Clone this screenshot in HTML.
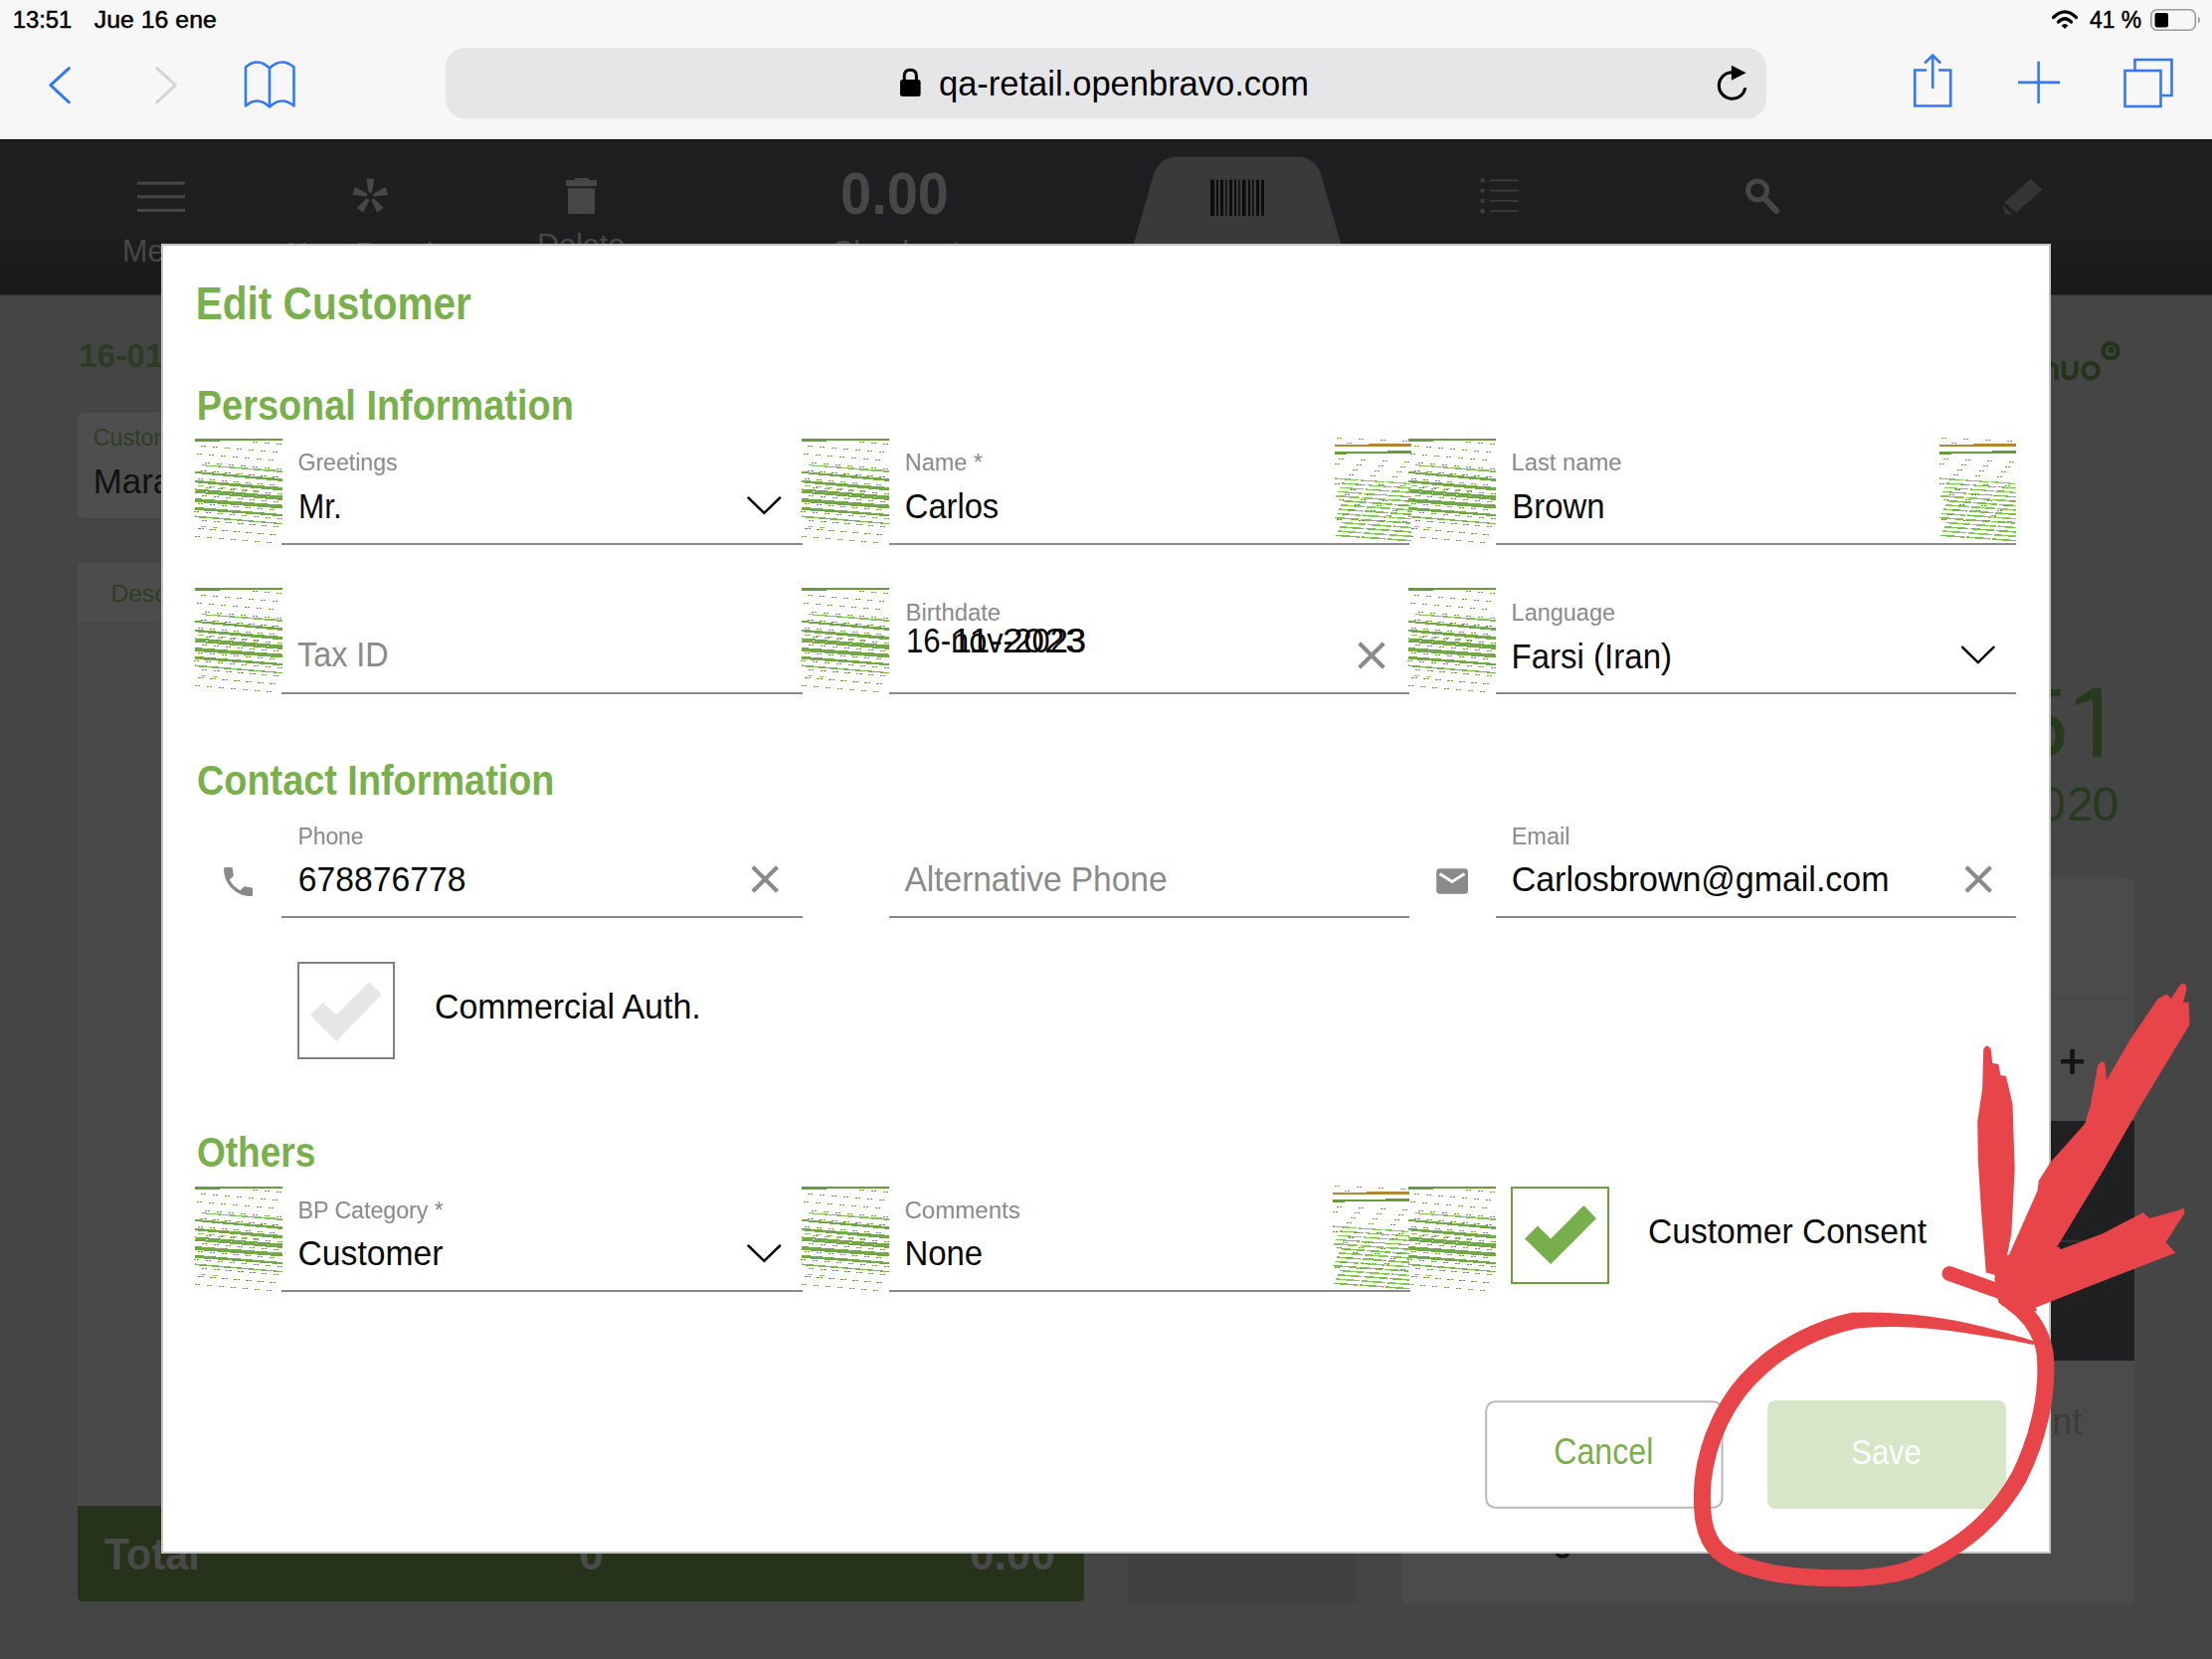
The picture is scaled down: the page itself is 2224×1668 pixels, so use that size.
<!DOCTYPE html><html><head><meta charset="utf-8"><title>Edit Customer</title><style>html,body{margin:0;padding:0;background:#454545;overflow:hidden;width:2224px;height:1668px}svg text{font-family:"Liberation Sans",sans-serif}</style></head><body><svg width="2224" height="1668" viewBox="0 0 2224 1668" style="display:block" font-family="Liberation Sans, sans-serif">
<defs></defs>
<rect x="0" y="0" width="2224" height="1668" fill="#454545"/>
<rect x="78" y="566" width="1012" height="1044" rx="6" fill="#4a4a4a"/>
<rect x="78" y="415" width="1012" height="106" rx="6" fill="#4e4e4e"/>
<rect x="78" y="566" width="1012" height="60" fill="#4c4c4c"/>
<rect x="78" y="626" width="1012" height="1" fill="#474747"/>
<text x="79.0" y="369.0" font-size="33.43" fill="#2c3b21" font-weight="bold">16-01-2020</text>
<text x="93.8" y="447.5" font-size="23.26" fill="#2e3d22">Customer</text>
<text x="93.8" y="496.0" font-size="34.88" fill="#111111">Maraxxx</text>
<text x="111.5" y="605.0" font-size="24.71" fill="#2e3d22">Description</text>
<path d="M78,1514 H1090 V1604 Q1090,1610 1084,1610 H84 Q78,1610 78,1604 Z" fill="#263219"/>
<text x="104.8" y="1578.0" font-size="45.06" fill="#4a4a4a" font-weight="bold" textLength="96.0" lengthAdjust="spacingAndGlyphs">Total</text>
<text x="582.0" y="1578.0" font-size="45.06" fill="#4a4a4a" font-weight="bold">0</text>
<text x="975.0" y="1578.0" font-size="45.06" fill="#4a4a4a" font-weight="bold" textLength="86.0" lengthAdjust="spacingAndGlyphs">0.00</text>
<rect x="1134" y="1500" width="230" height="112" rx="4" fill="#414141"/>
<rect x="1410" y="883" width="736" height="729" rx="6" fill="#4b4b4b"/>
<rect x="1410" y="1004" width="736" height="1" fill="#444"/>
<rect x="1410" y="1127" width="736" height="241" fill="#1f2022"/>
<rect x="1410" y="1247" width="736" height="2" fill="#303133"/>
<rect x="2072" y="1065" width="23" height="4.5" fill="#141414"/><rect x="2081.3" y="1055" width="4.5" height="25" fill="#141414"/>
<text x="2063.0" y="1442.0" font-size="36.34" fill="#3c3c3c">nt</text>
<text x="2025.5" y="760.5" font-size="97.38" fill="#263a1d">5</text>
<g fill="#263a1d"><rect x="2104" y="692" width="9" height="68.8"/><polygon points="2104.5,692 2113,692 2113,700 2086.8,709.2 2086.8,703.3"/></g>
<text x="2024 2050 2078 2103.5" y="825.3" font-size="47.97" fill="#263a1d">2020</text>
<g fill="none" stroke="#24341b" stroke-width="4.4"><path d="M2061,365.5 Q2067.6,366.5 2067.6,373 V382"/><path d="M2074.9,363 V375 Q2074.9,380 2080.5,380 Q2087.4,380 2087.4,372 V363"/><circle cx="2102" cy="372.6" r="7.6"/><circle cx="2122" cy="352.7" r="7.6"/></g>
<circle cx="2122.5" cy="352" r="3.2" fill="#24341b"/>
<circle cx="1571" cy="1558" r="7" fill="none" stroke="#111" stroke-width="3.5"/>
<linearGradient id="tbg" x1="0" y1="0" x2="0" y2="1"><stop offset="0" stop-color="#1f1f21"/><stop offset="0.6" stop-color="#1e1e20"/><stop offset="1" stop-color="#19191b"/></linearGradient>
<rect x="0" y="140" width="2224" height="156.5" fill="url(#tbg)"/><rect x="0" y="140" width="2224" height="1.5" fill="#0e0e0e"/>
<path d="M1125,296.5 L1160,175 Q1166,157.6 1186,157.6 H1302 Q1322,157.6 1328,175 L1363,296.5 Z" fill="#3a3a3b"/>
<g fill="#474747"><rect x="138" y="182.7" width="48" height="3"/><rect x="138" y="196.3" width="48" height="3"/><rect x="138" y="210" width="48" height="3"/></g>
<text x="123.0" y="263.0" font-size="30.52" fill="#474747">Menu</text>
<g fill="#474747"><polygon points="373.9,193.8 376.3,179.8 368.3,179.8 370.7,193.8"/><polygon points="376.1,197.7 390.2,195.7 387.7,188.1 375.1,194.7"/><polygon points="373.1,201.1 379.4,213.8 385.8,209.1 375.7,199.2"/><polygon points="368.9,199.2 358.8,209.1 365.2,213.8 371.5,201.1"/><polygon points="369.5,194.7 356.9,188.1 354.4,195.7 368.5,197.7"/></g>
<text x="288.0" y="266.0" font-size="30.52" fill="#474747">New Receipt</text>
<g fill="#474747"><rect x="578" y="179" width="14" height="2.5"/><rect x="569" y="181.2" width="31" height="6"/><rect x="571" y="189.3" width="27" height="25.7"/></g>
<text x="540.0" y="257.0" font-size="30.52" fill="#474747">Delete</text>
<text x="845.0" y="215.0" font-size="59.59" fill="#474747" font-weight="bold" textLength="109.0" lengthAdjust="spacingAndGlyphs">0.00</text>
<text x="836.0" y="264.0" font-size="30.52" fill="#474747">Checkout</text>
<g fill="#0d0d0d"><rect x="1217" y="180.7" width="4" height="36.3"/><rect x="1223" y="180.7" width="2" height="36.3"/><rect x="1227" y="180.7" width="3" height="36.3"/><rect x="1232" y="180.7" width="1.5" height="36.3"/><rect x="1236" y="180.7" width="3" height="36.3"/><rect x="1241" y="180.7" width="2" height="36.3"/><rect x="1245" y="180.7" width="1.5" height="36.3"/><rect x="1249" y="180.7" width="3.5" height="36.3"/><rect x="1255" y="180.7" width="2" height="36.3"/><rect x="1259" y="180.7" width="1.5" height="36.3"/><rect x="1263" y="180.7" width="3" height="36.3"/><rect x="1268" y="180.7" width="3" height="36.3"/></g>
<text x="1200.0" y="268.0" font-size="30.52" fill="#0d0d0d">Scan</text>
<g fill="#3e3e3e"><circle cx="1490.5" cy="181.3" r="2.2"/><rect x="1498" y="180.5" width="29" height="1.7"/><circle cx="1490.5" cy="191.6" r="2.2"/><rect x="1498" y="190.8" width="29" height="1.7"/><circle cx="1490.5" cy="201.9" r="2.2"/><rect x="1498" y="201.1" width="29" height="1.7"/><circle cx="1490.5" cy="212.2" r="2.2"/><rect x="1498" y="211.4" width="29" height="1.7"/></g>
<text x="1450.0" y="268.0" font-size="30.52" fill="#474747">Browse</text>
<circle cx="1767" cy="191.5" r="9.5" fill="none" stroke="#474747" stroke-width="5"/><line x1="1774" y1="199" x2="1786" y2="212" stroke="#474747" stroke-width="6" stroke-linecap="round"/>
<text x="1716.0" y="268.0" font-size="30.52" fill="#474747">Search</text>
<g fill="#353437"><polygon points="2041.5,180 2053.5,190.5 2027,214 2015,203.5"/><polygon points="2013,206 2024,215.5 2016,216"/></g>
<text x="1995.0" y="268.0" font-size="30.52" fill="#474747">Edit</text>
<rect x="0" y="0" width="2224" height="140" fill="#f7f7f7"/>
<text x="12.7" y="28.2" font-size="24.42" fill="#000" textLength="59.6" lengthAdjust="spacingAndGlyphs" stroke="#000" stroke-width="0.5">13:51</text>
<text x="94.8" y="28.2" font-size="24.42" fill="#000" textLength="123.0" lengthAdjust="spacingAndGlyphs" stroke="#000" stroke-width="0.5">Jue 16 ene</text>
<text x="2101.0" y="28.0" font-size="23.69" fill="#000" textLength="52.0" lengthAdjust="spacingAndGlyphs" stroke="#000" stroke-width="0.5">41 %</text>
<g fill="none" stroke="#000" stroke-width="3.2" stroke-linecap="round"><path d="M2064.5,17.5 Q2076,6 2087.5,17.5"/><path d="M2069.5,22 Q2076,15.5 2082.5,22"/></g><path d="M2072.5,25.5 L2076,29 L2079.5,25.5 Q2076,22.5 2072.5,25.5 Z" fill="#000"/>
<rect x="2162.8" y="9.8" width="44.5" height="20.5" rx="6" fill="none" stroke="#9a9a9a" stroke-width="1.6"/><rect x="2166.5" y="13" width="13.5" height="14.5" rx="2" fill="#000"/><path d="M2210,16.5 Q2214,20 2210,23.5 Z" fill="#9a9a9a"/>
<polyline points="69.4,68.7 50.8,85.6 69.4,102.8" fill="none" stroke="#3478f6" stroke-width="3" stroke-linecap="round" stroke-linejoin="round"/>
<polyline points="157.8,68.7 176.4,85.6 157.8,102.8" fill="none" stroke="#d4d4d4" stroke-width="3" stroke-linecap="round" stroke-linejoin="round"/>
<g fill="none" stroke="#3478f6" stroke-width="2.6" stroke-linejoin="round"><path d="M271,68.5 Q259,57 247,67.5 V106.5 Q259,96 271,107.5 Q283,96 295.5,106.5 V67.5 Q283,57 271,68.5 V107.5"/></g>
<rect x="448" y="48" width="1328" height="71.5" rx="20" fill="#e6e6e9"/>
<rect x="905" y="80" width="20.6" height="17" rx="2.5" fill="#000"/><path d="M909.2,81 V76.5 Q909.2,70.2 915.3,70.2 Q921.4,70.2 921.4,76.5 V81" fill="none" stroke="#000" stroke-width="3"/>
<text x="944.0" y="96.3" font-size="35.75" fill="#000" textLength="372.0" lengthAdjust="spacingAndGlyphs">qa-retail.openbravo.com</text>
<path d="M1741.6,72.7 A13.3,13.3 0 1 0 1754.7,88.3" fill="none" stroke="#000" stroke-width="3.1"/><polygon points="1740.8,65.8 1755.5,73.3 1740.8,80.8" fill="#000"/>
<g fill="none" stroke="#3478f6" stroke-width="2.6"><polyline points="1937,70.5 1925.2,70.5 1925.2,106.5 1961.2,106.5 1961.2,70.5 1949,70.5"/><line x1="1943.2" y1="56" x2="1943.2" y2="89"/><polyline points="1935.2,63.5 1943.2,55.5 1951.2,63.5"/></g>
<g stroke="#3478f6" stroke-width="2.6"><line x1="2029" y1="82.9" x2="2071" y2="82.9"/><line x1="2049.6" y1="61.7" x2="2049.6" y2="104"/></g>
<g fill="none" stroke="#3478f6" stroke-width="2.6"><polyline points="2146.5,70 2146.5,60 2183.5,60 2183.5,96 2173.5,96"/><rect x="2136.5" y="71" width="36" height="36"/></g>
<rect x="163" y="246" width="1898" height="1315" fill="#fff" stroke="#c4c4c4" stroke-width="2"/>
<text x="196.8" y="321.3" font-size="47.09" fill="#79b04c" font-weight="bold" textLength="277.0" lengthAdjust="spacingAndGlyphs">Edit Customer</text>
<text x="197.8" y="422.2" font-size="42.15" fill="#79b04c" font-weight="bold" textLength="379.0" lengthAdjust="spacingAndGlyphs">Personal Information</text>
<text x="198.0" y="798.6" font-size="41.86" fill="#79b04c" font-weight="bold" textLength="359.5" lengthAdjust="spacingAndGlyphs">Contact Information</text>
<text x="197.9" y="1172.8" font-size="42.15" fill="#79b04c" font-weight="bold" textLength="119.5" lengthAdjust="spacingAndGlyphs">Others</text>
<rect x="283" y="546" width="524" height="2" fill="#8a8a8a"/>
<rect x="894" y="546" width="523" height="2" fill="#8a8a8a"/>
<rect x="1504" y="546" width="523" height="2" fill="#8a8a8a"/>
<g transform="translate(196,441)" shape-rendering="crispEdges"><rect x="0" y="0.2" width="25" height="2.8" fill="#6a9a3d"/><rect x="25" y="-0.2" width="63" height="2.6" fill="#6a9a3d"/><g fill="#6a9a3d"><rect x="57.8" y="3.0" width="2.1" height="1" /><rect x="60.9" y="3.0" width="2.1" height="1" /><rect x="69.8" y="4.0" width="2.1" height="1" /><rect x="72.8" y="4.0" width="2.1" height="1" /><rect x="81.8" y="5.0" width="2.1" height="1" /><rect x="84.8" y="5.0" width="2.1" height="1" /><rect x="5.9" y="7.0" width="2.1" height="1" /><rect x="9.0" y="7.0" width="2.1" height="1" /><rect x="17.9" y="8.1" width="2.1" height="1" /><rect x="21.0" y="8.1" width="2.1" height="1" /><rect x="29.9" y="9.1" width="2.1" height="1" /><rect x="33.0" y="9.1" width="2.1" height="1" /><rect x="41.9" y="10.1" width="2.1" height="1" /><rect x="45.0" y="10.1" width="2.1" height="1" /><rect x="53.9" y="11.1" width="2.1" height="1" /><rect x="57.0" y="11.1" width="2.1" height="1" /><rect x="65.9" y="12.1" width="2.1" height="1" /><rect x="69.0" y="12.1" width="2.1" height="1" /><rect x="77.9" y="13.1" width="2.1" height="1" /><rect x="81.0" y="13.1" width="2.1" height="1" /><rect x="2.1" y="15.1" width="2.1" height="1" /><rect x="5.2" y="15.1" width="2.1" height="1" /><rect x="14.1" y="16.1" width="2.1" height="1" /><rect x="17.2" y="16.1" width="2.1" height="1" /><rect x="26.1" y="17.1" width="2.1" height="1" /><rect x="29.2" y="17.1" width="2.1" height="1" /><rect x="38.0" y="18.1" width="2.1" height="1" /><rect x="41.1" y="18.1" width="2.1" height="1" /><rect x="50.0" y="19.1" width="2.1" height="1" /><rect x="53.1" y="19.1" width="2.1" height="1" /><rect x="62.0" y="20.1" width="2.1" height="1" /><rect x="65.1" y="20.1" width="2.1" height="1" /><rect x="74.0" y="21.1" width="2.1" height="1" /><rect x="77.1" y="21.1" width="2.1" height="1" /><rect x="10.2" y="24.1" width="2.1" height="1" /><rect x="13.3" y="24.1" width="2.1" height="1" /><rect x="22.2" y="25.1" width="2.1" height="1" /><rect x="25.3" y="25.1" width="2.1" height="1" /><rect x="34.2" y="26.1" width="2.1" height="1" /><rect x="37.3" y="26.1" width="2.1" height="1" /><rect x="46.2" y="27.1" width="2.1" height="1" /><rect x="49.3" y="27.1" width="2.1" height="1" /><rect x="58.2" y="28.1" width="2.1" height="1" /><rect x="61.3" y="28.1" width="2.1" height="1" /><rect x="70.2" y="29.1" width="2.1" height="1" /><rect x="73.3" y="29.1" width="2.1" height="1" /><rect x="82.2" y="30.1" width="2.1" height="1" /><rect x="85.3" y="30.1" width="2.1" height="1" /><rect x="6.3" y="32.0" width="2.1" height="1" /><rect x="9.4" y="32.0" width="2.1" height="1" /><rect x="18.4" y="33.0" width="2.1" height="1" /><rect x="21.5" y="33.0" width="2.1" height="1" /><rect x="30.4" y="34.0" width="2.1" height="1" /><rect x="33.5" y="34.0" width="2.1" height="1" /><rect x="42.4" y="35.0" width="2.1" height="1" /><rect x="45.5" y="35.0" width="2.1" height="1" /><rect x="54.4" y="36.0" width="2.1" height="1" /><rect x="57.5" y="36.0" width="2.1" height="1" /><rect x="66.3" y="37.0" width="2.1" height="1" /><rect x="69.4" y="37.0" width="2.1" height="1" /><rect x="78.3" y="38.0" width="2.1" height="1" /><rect x="81.4" y="38.0" width="2.1" height="1" /><rect x="2.5" y="40.0" width="2.1" height="1" /><rect x="5.6" y="40.0" width="2.1" height="1" /><rect x="14.5" y="41.0" width="2.1" height="1" /><rect x="17.6" y="41.0" width="2.1" height="1" /><rect x="26.5" y="42.0" width="2.1" height="1" /><rect x="29.6" y="42.0" width="2.1" height="1" /><rect x="38.5" y="43.0" width="2.1" height="1" /><rect x="41.6" y="43.0" width="2.1" height="1" /><rect x="50.5" y="44.0" width="2.1" height="1" /><rect x="53.6" y="44.0" width="2.1" height="1" /><rect x="62.5" y="45.0" width="2.1" height="1" /><rect x="65.6" y="45.0" width="2.1" height="1" /><rect x="74.5" y="46.0" width="2.1" height="1" /><rect x="77.6" y="46.0" width="2.1" height="1" /><rect x="10.7" y="49.0" width="2.1" height="1" /><rect x="13.8" y="49.0" width="2.1" height="1" /><rect x="22.6" y="50.0" width="2.1" height="1" /><rect x="25.8" y="50.0" width="2.1" height="1" /><rect x="34.6" y="51.0" width="2.1" height="1" /><rect x="37.8" y="51.0" width="2.1" height="1" /><rect x="46.6" y="52.0" width="2.1" height="1" /><rect x="49.8" y="52.0" width="2.1" height="1" /><rect x="58.6" y="53.0" width="2.1" height="1" /><rect x="61.8" y="53.0" width="2.1" height="1" /><rect x="70.7" y="54.0" width="2.1" height="1" /><rect x="73.8" y="54.0" width="2.1" height="1" /><rect x="82.7" y="55.0" width="2.1" height="1" /><rect x="85.8" y="55.0" width="2.1" height="1" /><rect x="6.8" y="57.0" width="2.1" height="1" /><rect x="9.9" y="57.0" width="2.1" height="1" /><rect x="18.8" y="58.0" width="2.1" height="1" /><rect x="21.9" y="58.0" width="2.1" height="1" /><rect x="30.8" y="59.0" width="2.1" height="1" /><rect x="33.9" y="59.0" width="2.1" height="1" /><rect x="42.8" y="60.0" width="2.1" height="1" /><rect x="45.9" y="60.0" width="2.1" height="1" /><rect x="54.8" y="61.0" width="2.1" height="1" /><rect x="57.9" y="61.0" width="2.1" height="1" /><rect x="66.8" y="62.0" width="2.1" height="1" /><rect x="69.9" y="62.0" width="2.1" height="1" /><rect x="78.8" y="63.0" width="2.1" height="1" /><rect x="81.9" y="63.0" width="2.1" height="1" /><rect x="3.0" y="65.0" width="2.1" height="1" /><rect x="6.1" y="65.0" width="2.1" height="1" /><rect x="15.0" y="66.0" width="2.1" height="1" /><rect x="18.1" y="66.0" width="2.1" height="1" /><rect x="27.0" y="67.0" width="2.1" height="1" /><rect x="30.1" y="67.0" width="2.1" height="1" /><rect x="39.0" y="68.0" width="2.1" height="1" /><rect x="42.1" y="68.0" width="2.1" height="1" /><rect x="51.0" y="69.0" width="2.1" height="1" /><rect x="54.1" y="69.0" width="2.1" height="1" /><rect x="63.0" y="70.0" width="2.1" height="1" /><rect x="66.0" y="70.0" width="2.1" height="1" /><rect x="75.0" y="71.0" width="2.1" height="1" /><rect x="78.0" y="71.0" width="2.1" height="1" /><rect x="-0.9" y="73.0" width="2.1" height="1" /><rect x="2.2" y="73.0" width="2.1" height="1" /><rect x="11.1" y="74.0" width="2.1" height="1" /><rect x="14.2" y="74.0" width="2.1" height="1" /><rect x="23.1" y="75.0" width="2.1" height="1" /><rect x="26.2" y="75.0" width="2.1" height="1" /><rect x="35.1" y="76.0" width="2.1" height="1" /><rect x="38.2" y="76.0" width="2.1" height="1" /><rect x="47.1" y="77.0" width="2.1" height="1" /><rect x="50.2" y="77.0" width="2.1" height="1" /><rect x="59.1" y="78.0" width="2.1" height="1" /><rect x="62.2" y="78.0" width="2.1" height="1" /><rect x="71.1" y="79.0" width="2.1" height="1" /><rect x="74.2" y="79.0" width="2.1" height="1" /><rect x="83.1" y="80.0" width="2.1" height="1" /><rect x="86.2" y="80.0" width="2.1" height="1" /><rect x="7.2" y="82.0" width="2.1" height="1" /><rect x="10.3" y="82.0" width="2.1" height="1" /><rect x="19.2" y="83.0" width="2.1" height="1" /><rect x="22.4" y="83.0" width="2.1" height="1" /><rect x="31.2" y="84.0" width="2.1" height="1" /><rect x="34.4" y="84.0" width="2.1" height="1" /><rect x="43.2" y="85.0" width="2.1" height="1" /><rect x="46.4" y="85.0" width="2.1" height="1" /><rect x="55.2" y="86.0" width="2.1" height="1" /><rect x="58.4" y="86.0" width="2.1" height="1" /><rect x="67.2" y="87.0" width="2.1" height="1" /><rect x="70.3" y="87.0" width="2.1" height="1" /><rect x="79.2" y="88.0" width="2.1" height="1" /><rect x="82.3" y="88.0" width="2.1" height="1" /><rect x="3.4" y="90.0" width="2.1" height="1" /><rect x="6.5" y="90.0" width="2.1" height="1" /><rect x="15.4" y="91.0" width="2.1" height="1" /><rect x="18.5" y="91.0" width="2.1" height="1" /><rect x="27.4" y="92.0" width="2.1" height="1" /><rect x="30.5" y="92.0" width="2.1" height="1" /><rect x="39.4" y="93.0" width="2.1" height="1" /><rect x="42.5" y="93.0" width="2.1" height="1" /><rect x="51.4" y="94.0" width="2.1" height="1" /><rect x="54.5" y="94.0" width="2.1" height="1" /><rect x="63.4" y="95.0" width="2.1" height="1" /><rect x="66.5" y="95.0" width="2.1" height="1" /><rect x="75.4" y="96.0" width="2.1" height="1" /><rect x="78.5" y="96.0" width="2.1" height="1" /><rect x="-0.5" y="98.0" width="2.1" height="1" /><rect x="2.6" y="98.0" width="2.1" height="1" /><rect x="11.5" y="99.0" width="2.1" height="1" /><rect x="14.6" y="99.0" width="2.1" height="1" /><rect x="23.5" y="100.0" width="2.1" height="1" /><rect x="26.6" y="100.0" width="2.1" height="1" /><rect x="35.5" y="101.0" width="2.1" height="1" /><rect x="38.6" y="101.0" width="2.1" height="1" /><rect x="47.5" y="102.0" width="2.1" height="1" /><rect x="50.6" y="102.0" width="2.1" height="1" /><rect x="59.5" y="103.0" width="2.1" height="1" /><rect x="62.6" y="103.0" width="2.1" height="1" /><rect x="71.5" y="104.0" width="2.1" height="1" /><rect x="74.6" y="104.0" width="2.1" height="1" /></g><polygon points="6.6,26.12 88,32.00 88,34.00 6.6,27.12" fill="#86bd5e"/><polygon points="0,32.90 88,40.20 88,43.00 0,34.90" fill="#72a847"/><polygon points="0,41.75 88,48.95 88,52.45 0,44.25" fill="#72a847"/><polygon points="0,50.40 88,57.50 88,59.70 0,52.40" fill="#72a847"/><polygon points="0,52.60 88,59.70 88,61.90 0,54.60" fill="#72a847"/><polygon points="0,60.00 88,66.60 88,70.40 0,63.80" fill="#72a847"/><polygon points="0,68.75 88,76.00 88,78.20 0,71.85" fill="#72a847"/><polygon points="0,77.45 88,85.00 88,86.20 0,79.15" fill="#7cb552"/><rect x="3.0" y="46.5" width="6" height="1" fill="#8cc268"/><rect x="14.0" y="47.5" width="6" height="1" fill="#8cc268"/><rect x="25.0" y="48.5" width="6" height="1" fill="#8cc268"/><rect x="36.0" y="49.5" width="6" height="1" fill="#8cc268"/><rect x="47.0" y="50.5" width="6" height="1" fill="#8cc268"/><rect x="58.0" y="51.5" width="6" height="1" fill="#8cc268"/><rect x="6.0" y="87.5" width="5" height="1" fill="#8cc268"/><rect x="18.0" y="88.5" width="5" height="1" fill="#8cc268"/></g>
<g transform="translate(806,441)" shape-rendering="crispEdges"><rect x="0" y="0.2" width="25" height="2.8" fill="#6a9a3d"/><rect x="25" y="-0.2" width="63" height="2.6" fill="#6a9a3d"/><g fill="#6a9a3d"><rect x="57.8" y="3.0" width="2.1" height="1" /><rect x="60.9" y="3.0" width="2.1" height="1" /><rect x="69.8" y="4.0" width="2.1" height="1" /><rect x="72.8" y="4.0" width="2.1" height="1" /><rect x="81.8" y="5.0" width="2.1" height="1" /><rect x="84.8" y="5.0" width="2.1" height="1" /><rect x="5.9" y="7.0" width="2.1" height="1" /><rect x="9.0" y="7.0" width="2.1" height="1" /><rect x="17.9" y="8.1" width="2.1" height="1" /><rect x="21.0" y="8.1" width="2.1" height="1" /><rect x="29.9" y="9.1" width="2.1" height="1" /><rect x="33.0" y="9.1" width="2.1" height="1" /><rect x="41.9" y="10.1" width="2.1" height="1" /><rect x="45.0" y="10.1" width="2.1" height="1" /><rect x="53.9" y="11.1" width="2.1" height="1" /><rect x="57.0" y="11.1" width="2.1" height="1" /><rect x="65.9" y="12.1" width="2.1" height="1" /><rect x="69.0" y="12.1" width="2.1" height="1" /><rect x="77.9" y="13.1" width="2.1" height="1" /><rect x="81.0" y="13.1" width="2.1" height="1" /><rect x="2.1" y="15.1" width="2.1" height="1" /><rect x="5.2" y="15.1" width="2.1" height="1" /><rect x="14.1" y="16.1" width="2.1" height="1" /><rect x="17.2" y="16.1" width="2.1" height="1" /><rect x="26.1" y="17.1" width="2.1" height="1" /><rect x="29.2" y="17.1" width="2.1" height="1" /><rect x="38.0" y="18.1" width="2.1" height="1" /><rect x="41.1" y="18.1" width="2.1" height="1" /><rect x="50.0" y="19.1" width="2.1" height="1" /><rect x="53.1" y="19.1" width="2.1" height="1" /><rect x="62.0" y="20.1" width="2.1" height="1" /><rect x="65.1" y="20.1" width="2.1" height="1" /><rect x="74.0" y="21.1" width="2.1" height="1" /><rect x="77.1" y="21.1" width="2.1" height="1" /><rect x="10.2" y="24.1" width="2.1" height="1" /><rect x="13.3" y="24.1" width="2.1" height="1" /><rect x="22.2" y="25.1" width="2.1" height="1" /><rect x="25.3" y="25.1" width="2.1" height="1" /><rect x="34.2" y="26.1" width="2.1" height="1" /><rect x="37.3" y="26.1" width="2.1" height="1" /><rect x="46.2" y="27.1" width="2.1" height="1" /><rect x="49.3" y="27.1" width="2.1" height="1" /><rect x="58.2" y="28.1" width="2.1" height="1" /><rect x="61.3" y="28.1" width="2.1" height="1" /><rect x="70.2" y="29.1" width="2.1" height="1" /><rect x="73.3" y="29.1" width="2.1" height="1" /><rect x="82.2" y="30.1" width="2.1" height="1" /><rect x="85.3" y="30.1" width="2.1" height="1" /><rect x="6.3" y="32.0" width="2.1" height="1" /><rect x="9.4" y="32.0" width="2.1" height="1" /><rect x="18.4" y="33.0" width="2.1" height="1" /><rect x="21.5" y="33.0" width="2.1" height="1" /><rect x="30.4" y="34.0" width="2.1" height="1" /><rect x="33.5" y="34.0" width="2.1" height="1" /><rect x="42.4" y="35.0" width="2.1" height="1" /><rect x="45.5" y="35.0" width="2.1" height="1" /><rect x="54.4" y="36.0" width="2.1" height="1" /><rect x="57.5" y="36.0" width="2.1" height="1" /><rect x="66.3" y="37.0" width="2.1" height="1" /><rect x="69.4" y="37.0" width="2.1" height="1" /><rect x="78.3" y="38.0" width="2.1" height="1" /><rect x="81.4" y="38.0" width="2.1" height="1" /><rect x="2.5" y="40.0" width="2.1" height="1" /><rect x="5.6" y="40.0" width="2.1" height="1" /><rect x="14.5" y="41.0" width="2.1" height="1" /><rect x="17.6" y="41.0" width="2.1" height="1" /><rect x="26.5" y="42.0" width="2.1" height="1" /><rect x="29.6" y="42.0" width="2.1" height="1" /><rect x="38.5" y="43.0" width="2.1" height="1" /><rect x="41.6" y="43.0" width="2.1" height="1" /><rect x="50.5" y="44.0" width="2.1" height="1" /><rect x="53.6" y="44.0" width="2.1" height="1" /><rect x="62.5" y="45.0" width="2.1" height="1" /><rect x="65.6" y="45.0" width="2.1" height="1" /><rect x="74.5" y="46.0" width="2.1" height="1" /><rect x="77.6" y="46.0" width="2.1" height="1" /><rect x="10.7" y="49.0" width="2.1" height="1" /><rect x="13.8" y="49.0" width="2.1" height="1" /><rect x="22.6" y="50.0" width="2.1" height="1" /><rect x="25.8" y="50.0" width="2.1" height="1" /><rect x="34.6" y="51.0" width="2.1" height="1" /><rect x="37.8" y="51.0" width="2.1" height="1" /><rect x="46.6" y="52.0" width="2.1" height="1" /><rect x="49.8" y="52.0" width="2.1" height="1" /><rect x="58.6" y="53.0" width="2.1" height="1" /><rect x="61.8" y="53.0" width="2.1" height="1" /><rect x="70.7" y="54.0" width="2.1" height="1" /><rect x="73.8" y="54.0" width="2.1" height="1" /><rect x="82.7" y="55.0" width="2.1" height="1" /><rect x="85.8" y="55.0" width="2.1" height="1" /><rect x="6.8" y="57.0" width="2.1" height="1" /><rect x="9.9" y="57.0" width="2.1" height="1" /><rect x="18.8" y="58.0" width="2.1" height="1" /><rect x="21.9" y="58.0" width="2.1" height="1" /><rect x="30.8" y="59.0" width="2.1" height="1" /><rect x="33.9" y="59.0" width="2.1" height="1" /><rect x="42.8" y="60.0" width="2.1" height="1" /><rect x="45.9" y="60.0" width="2.1" height="1" /><rect x="54.8" y="61.0" width="2.1" height="1" /><rect x="57.9" y="61.0" width="2.1" height="1" /><rect x="66.8" y="62.0" width="2.1" height="1" /><rect x="69.9" y="62.0" width="2.1" height="1" /><rect x="78.8" y="63.0" width="2.1" height="1" /><rect x="81.9" y="63.0" width="2.1" height="1" /><rect x="3.0" y="65.0" width="2.1" height="1" /><rect x="6.1" y="65.0" width="2.1" height="1" /><rect x="15.0" y="66.0" width="2.1" height="1" /><rect x="18.1" y="66.0" width="2.1" height="1" /><rect x="27.0" y="67.0" width="2.1" height="1" /><rect x="30.1" y="67.0" width="2.1" height="1" /><rect x="39.0" y="68.0" width="2.1" height="1" /><rect x="42.1" y="68.0" width="2.1" height="1" /><rect x="51.0" y="69.0" width="2.1" height="1" /><rect x="54.1" y="69.0" width="2.1" height="1" /><rect x="63.0" y="70.0" width="2.1" height="1" /><rect x="66.0" y="70.0" width="2.1" height="1" /><rect x="75.0" y="71.0" width="2.1" height="1" /><rect x="78.0" y="71.0" width="2.1" height="1" /><rect x="-0.9" y="73.0" width="2.1" height="1" /><rect x="2.2" y="73.0" width="2.1" height="1" /><rect x="11.1" y="74.0" width="2.1" height="1" /><rect x="14.2" y="74.0" width="2.1" height="1" /><rect x="23.1" y="75.0" width="2.1" height="1" /><rect x="26.2" y="75.0" width="2.1" height="1" /><rect x="35.1" y="76.0" width="2.1" height="1" /><rect x="38.2" y="76.0" width="2.1" height="1" /><rect x="47.1" y="77.0" width="2.1" height="1" /><rect x="50.2" y="77.0" width="2.1" height="1" /><rect x="59.1" y="78.0" width="2.1" height="1" /><rect x="62.2" y="78.0" width="2.1" height="1" /><rect x="71.1" y="79.0" width="2.1" height="1" /><rect x="74.2" y="79.0" width="2.1" height="1" /><rect x="83.1" y="80.0" width="2.1" height="1" /><rect x="86.2" y="80.0" width="2.1" height="1" /><rect x="7.2" y="82.0" width="2.1" height="1" /><rect x="10.3" y="82.0" width="2.1" height="1" /><rect x="19.2" y="83.0" width="2.1" height="1" /><rect x="22.4" y="83.0" width="2.1" height="1" /><rect x="31.2" y="84.0" width="2.1" height="1" /><rect x="34.4" y="84.0" width="2.1" height="1" /><rect x="43.2" y="85.0" width="2.1" height="1" /><rect x="46.4" y="85.0" width="2.1" height="1" /><rect x="55.2" y="86.0" width="2.1" height="1" /><rect x="58.4" y="86.0" width="2.1" height="1" /><rect x="67.2" y="87.0" width="2.1" height="1" /><rect x="70.3" y="87.0" width="2.1" height="1" /><rect x="79.2" y="88.0" width="2.1" height="1" /><rect x="82.3" y="88.0" width="2.1" height="1" /><rect x="3.4" y="90.0" width="2.1" height="1" /><rect x="6.5" y="90.0" width="2.1" height="1" /><rect x="15.4" y="91.0" width="2.1" height="1" /><rect x="18.5" y="91.0" width="2.1" height="1" /><rect x="27.4" y="92.0" width="2.1" height="1" /><rect x="30.5" y="92.0" width="2.1" height="1" /><rect x="39.4" y="93.0" width="2.1" height="1" /><rect x="42.5" y="93.0" width="2.1" height="1" /><rect x="51.4" y="94.0" width="2.1" height="1" /><rect x="54.5" y="94.0" width="2.1" height="1" /><rect x="63.4" y="95.0" width="2.1" height="1" /><rect x="66.5" y="95.0" width="2.1" height="1" /><rect x="75.4" y="96.0" width="2.1" height="1" /><rect x="78.5" y="96.0" width="2.1" height="1" /><rect x="-0.5" y="98.0" width="2.1" height="1" /><rect x="2.6" y="98.0" width="2.1" height="1" /><rect x="11.5" y="99.0" width="2.1" height="1" /><rect x="14.6" y="99.0" width="2.1" height="1" /><rect x="23.5" y="100.0" width="2.1" height="1" /><rect x="26.6" y="100.0" width="2.1" height="1" /><rect x="35.5" y="101.0" width="2.1" height="1" /><rect x="38.6" y="101.0" width="2.1" height="1" /><rect x="47.5" y="102.0" width="2.1" height="1" /><rect x="50.6" y="102.0" width="2.1" height="1" /><rect x="59.5" y="103.0" width="2.1" height="1" /><rect x="62.6" y="103.0" width="2.1" height="1" /><rect x="71.5" y="104.0" width="2.1" height="1" /><rect x="74.6" y="104.0" width="2.1" height="1" /></g><polygon points="6.6,26.12 88,32.00 88,34.00 6.6,27.12" fill="#86bd5e"/><polygon points="0,32.90 88,40.20 88,43.00 0,34.90" fill="#72a847"/><polygon points="0,41.75 88,48.95 88,52.45 0,44.25" fill="#72a847"/><polygon points="0,50.40 88,57.50 88,59.70 0,52.40" fill="#72a847"/><polygon points="0,52.60 88,59.70 88,61.90 0,54.60" fill="#72a847"/><polygon points="0,60.00 88,66.60 88,70.40 0,63.80" fill="#72a847"/><polygon points="0,68.75 88,76.00 88,78.20 0,71.85" fill="#72a847"/><polygon points="0,77.45 88,85.00 88,86.20 0,79.15" fill="#7cb552"/><rect x="3.0" y="46.5" width="6" height="1" fill="#8cc268"/><rect x="14.0" y="47.5" width="6" height="1" fill="#8cc268"/><rect x="25.0" y="48.5" width="6" height="1" fill="#8cc268"/><rect x="36.0" y="49.5" width="6" height="1" fill="#8cc268"/><rect x="47.0" y="50.5" width="6" height="1" fill="#8cc268"/><rect x="58.0" y="51.5" width="6" height="1" fill="#8cc268"/><rect x="6.0" y="87.5" width="5" height="1" fill="#8cc268"/><rect x="18.0" y="88.5" width="5" height="1" fill="#8cc268"/></g>
<g transform="translate(1416,441)" shape-rendering="crispEdges"><rect x="0" y="0.2" width="25" height="2.8" fill="#6a9a3d"/><rect x="25" y="-0.2" width="63" height="2.6" fill="#6a9a3d"/><g fill="#6a9a3d"><rect x="57.8" y="3.0" width="2.1" height="1" /><rect x="60.9" y="3.0" width="2.1" height="1" /><rect x="69.8" y="4.0" width="2.1" height="1" /><rect x="72.8" y="4.0" width="2.1" height="1" /><rect x="81.8" y="5.0" width="2.1" height="1" /><rect x="84.8" y="5.0" width="2.1" height="1" /><rect x="5.9" y="7.0" width="2.1" height="1" /><rect x="9.0" y="7.0" width="2.1" height="1" /><rect x="17.9" y="8.1" width="2.1" height="1" /><rect x="21.0" y="8.1" width="2.1" height="1" /><rect x="29.9" y="9.1" width="2.1" height="1" /><rect x="33.0" y="9.1" width="2.1" height="1" /><rect x="41.9" y="10.1" width="2.1" height="1" /><rect x="45.0" y="10.1" width="2.1" height="1" /><rect x="53.9" y="11.1" width="2.1" height="1" /><rect x="57.0" y="11.1" width="2.1" height="1" /><rect x="65.9" y="12.1" width="2.1" height="1" /><rect x="69.0" y="12.1" width="2.1" height="1" /><rect x="77.9" y="13.1" width="2.1" height="1" /><rect x="81.0" y="13.1" width="2.1" height="1" /><rect x="2.1" y="15.1" width="2.1" height="1" /><rect x="5.2" y="15.1" width="2.1" height="1" /><rect x="14.1" y="16.1" width="2.1" height="1" /><rect x="17.2" y="16.1" width="2.1" height="1" /><rect x="26.1" y="17.1" width="2.1" height="1" /><rect x="29.2" y="17.1" width="2.1" height="1" /><rect x="38.0" y="18.1" width="2.1" height="1" /><rect x="41.1" y="18.1" width="2.1" height="1" /><rect x="50.0" y="19.1" width="2.1" height="1" /><rect x="53.1" y="19.1" width="2.1" height="1" /><rect x="62.0" y="20.1" width="2.1" height="1" /><rect x="65.1" y="20.1" width="2.1" height="1" /><rect x="74.0" y="21.1" width="2.1" height="1" /><rect x="77.1" y="21.1" width="2.1" height="1" /><rect x="10.2" y="24.1" width="2.1" height="1" /><rect x="13.3" y="24.1" width="2.1" height="1" /><rect x="22.2" y="25.1" width="2.1" height="1" /><rect x="25.3" y="25.1" width="2.1" height="1" /><rect x="34.2" y="26.1" width="2.1" height="1" /><rect x="37.3" y="26.1" width="2.1" height="1" /><rect x="46.2" y="27.1" width="2.1" height="1" /><rect x="49.3" y="27.1" width="2.1" height="1" /><rect x="58.2" y="28.1" width="2.1" height="1" /><rect x="61.3" y="28.1" width="2.1" height="1" /><rect x="70.2" y="29.1" width="2.1" height="1" /><rect x="73.3" y="29.1" width="2.1" height="1" /><rect x="82.2" y="30.1" width="2.1" height="1" /><rect x="85.3" y="30.1" width="2.1" height="1" /><rect x="6.3" y="32.0" width="2.1" height="1" /><rect x="9.4" y="32.0" width="2.1" height="1" /><rect x="18.4" y="33.0" width="2.1" height="1" /><rect x="21.5" y="33.0" width="2.1" height="1" /><rect x="30.4" y="34.0" width="2.1" height="1" /><rect x="33.5" y="34.0" width="2.1" height="1" /><rect x="42.4" y="35.0" width="2.1" height="1" /><rect x="45.5" y="35.0" width="2.1" height="1" /><rect x="54.4" y="36.0" width="2.1" height="1" /><rect x="57.5" y="36.0" width="2.1" height="1" /><rect x="66.3" y="37.0" width="2.1" height="1" /><rect x="69.4" y="37.0" width="2.1" height="1" /><rect x="78.3" y="38.0" width="2.1" height="1" /><rect x="81.4" y="38.0" width="2.1" height="1" /><rect x="2.5" y="40.0" width="2.1" height="1" /><rect x="5.6" y="40.0" width="2.1" height="1" /><rect x="14.5" y="41.0" width="2.1" height="1" /><rect x="17.6" y="41.0" width="2.1" height="1" /><rect x="26.5" y="42.0" width="2.1" height="1" /><rect x="29.6" y="42.0" width="2.1" height="1" /><rect x="38.5" y="43.0" width="2.1" height="1" /><rect x="41.6" y="43.0" width="2.1" height="1" /><rect x="50.5" y="44.0" width="2.1" height="1" /><rect x="53.6" y="44.0" width="2.1" height="1" /><rect x="62.5" y="45.0" width="2.1" height="1" /><rect x="65.6" y="45.0" width="2.1" height="1" /><rect x="74.5" y="46.0" width="2.1" height="1" /><rect x="77.6" y="46.0" width="2.1" height="1" /><rect x="10.7" y="49.0" width="2.1" height="1" /><rect x="13.8" y="49.0" width="2.1" height="1" /><rect x="22.6" y="50.0" width="2.1" height="1" /><rect x="25.8" y="50.0" width="2.1" height="1" /><rect x="34.6" y="51.0" width="2.1" height="1" /><rect x="37.8" y="51.0" width="2.1" height="1" /><rect x="46.6" y="52.0" width="2.1" height="1" /><rect x="49.8" y="52.0" width="2.1" height="1" /><rect x="58.6" y="53.0" width="2.1" height="1" /><rect x="61.8" y="53.0" width="2.1" height="1" /><rect x="70.7" y="54.0" width="2.1" height="1" /><rect x="73.8" y="54.0" width="2.1" height="1" /><rect x="82.7" y="55.0" width="2.1" height="1" /><rect x="85.8" y="55.0" width="2.1" height="1" /><rect x="6.8" y="57.0" width="2.1" height="1" /><rect x="9.9" y="57.0" width="2.1" height="1" /><rect x="18.8" y="58.0" width="2.1" height="1" /><rect x="21.9" y="58.0" width="2.1" height="1" /><rect x="30.8" y="59.0" width="2.1" height="1" /><rect x="33.9" y="59.0" width="2.1" height="1" /><rect x="42.8" y="60.0" width="2.1" height="1" /><rect x="45.9" y="60.0" width="2.1" height="1" /><rect x="54.8" y="61.0" width="2.1" height="1" /><rect x="57.9" y="61.0" width="2.1" height="1" /><rect x="66.8" y="62.0" width="2.1" height="1" /><rect x="69.9" y="62.0" width="2.1" height="1" /><rect x="78.8" y="63.0" width="2.1" height="1" /><rect x="81.9" y="63.0" width="2.1" height="1" /><rect x="3.0" y="65.0" width="2.1" height="1" /><rect x="6.1" y="65.0" width="2.1" height="1" /><rect x="15.0" y="66.0" width="2.1" height="1" /><rect x="18.1" y="66.0" width="2.1" height="1" /><rect x="27.0" y="67.0" width="2.1" height="1" /><rect x="30.1" y="67.0" width="2.1" height="1" /><rect x="39.0" y="68.0" width="2.1" height="1" /><rect x="42.1" y="68.0" width="2.1" height="1" /><rect x="51.0" y="69.0" width="2.1" height="1" /><rect x="54.1" y="69.0" width="2.1" height="1" /><rect x="63.0" y="70.0" width="2.1" height="1" /><rect x="66.0" y="70.0" width="2.1" height="1" /><rect x="75.0" y="71.0" width="2.1" height="1" /><rect x="78.0" y="71.0" width="2.1" height="1" /><rect x="-0.9" y="73.0" width="2.1" height="1" /><rect x="2.2" y="73.0" width="2.1" height="1" /><rect x="11.1" y="74.0" width="2.1" height="1" /><rect x="14.2" y="74.0" width="2.1" height="1" /><rect x="23.1" y="75.0" width="2.1" height="1" /><rect x="26.2" y="75.0" width="2.1" height="1" /><rect x="35.1" y="76.0" width="2.1" height="1" /><rect x="38.2" y="76.0" width="2.1" height="1" /><rect x="47.1" y="77.0" width="2.1" height="1" /><rect x="50.2" y="77.0" width="2.1" height="1" /><rect x="59.1" y="78.0" width="2.1" height="1" /><rect x="62.2" y="78.0" width="2.1" height="1" /><rect x="71.1" y="79.0" width="2.1" height="1" /><rect x="74.2" y="79.0" width="2.1" height="1" /><rect x="83.1" y="80.0" width="2.1" height="1" /><rect x="86.2" y="80.0" width="2.1" height="1" /><rect x="7.2" y="82.0" width="2.1" height="1" /><rect x="10.3" y="82.0" width="2.1" height="1" /><rect x="19.2" y="83.0" width="2.1" height="1" /><rect x="22.4" y="83.0" width="2.1" height="1" /><rect x="31.2" y="84.0" width="2.1" height="1" /><rect x="34.4" y="84.0" width="2.1" height="1" /><rect x="43.2" y="85.0" width="2.1" height="1" /><rect x="46.4" y="85.0" width="2.1" height="1" /><rect x="55.2" y="86.0" width="2.1" height="1" /><rect x="58.4" y="86.0" width="2.1" height="1" /><rect x="67.2" y="87.0" width="2.1" height="1" /><rect x="70.3" y="87.0" width="2.1" height="1" /><rect x="79.2" y="88.0" width="2.1" height="1" /><rect x="82.3" y="88.0" width="2.1" height="1" /><rect x="3.4" y="90.0" width="2.1" height="1" /><rect x="6.5" y="90.0" width="2.1" height="1" /><rect x="15.4" y="91.0" width="2.1" height="1" /><rect x="18.5" y="91.0" width="2.1" height="1" /><rect x="27.4" y="92.0" width="2.1" height="1" /><rect x="30.5" y="92.0" width="2.1" height="1" /><rect x="39.4" y="93.0" width="2.1" height="1" /><rect x="42.5" y="93.0" width="2.1" height="1" /><rect x="51.4" y="94.0" width="2.1" height="1" /><rect x="54.5" y="94.0" width="2.1" height="1" /><rect x="63.4" y="95.0" width="2.1" height="1" /><rect x="66.5" y="95.0" width="2.1" height="1" /><rect x="75.4" y="96.0" width="2.1" height="1" /><rect x="78.5" y="96.0" width="2.1" height="1" /><rect x="-0.5" y="98.0" width="2.1" height="1" /><rect x="2.6" y="98.0" width="2.1" height="1" /><rect x="11.5" y="99.0" width="2.1" height="1" /><rect x="14.6" y="99.0" width="2.1" height="1" /><rect x="23.5" y="100.0" width="2.1" height="1" /><rect x="26.6" y="100.0" width="2.1" height="1" /><rect x="35.5" y="101.0" width="2.1" height="1" /><rect x="38.6" y="101.0" width="2.1" height="1" /><rect x="47.5" y="102.0" width="2.1" height="1" /><rect x="50.6" y="102.0" width="2.1" height="1" /><rect x="59.5" y="103.0" width="2.1" height="1" /><rect x="62.6" y="103.0" width="2.1" height="1" /><rect x="71.5" y="104.0" width="2.1" height="1" /><rect x="74.6" y="104.0" width="2.1" height="1" /></g><polygon points="6.6,26.12 88,32.00 88,34.00 6.6,27.12" fill="#86bd5e"/><polygon points="0,32.90 88,40.20 88,43.00 0,34.90" fill="#72a847"/><polygon points="0,41.75 88,48.95 88,52.45 0,44.25" fill="#72a847"/><polygon points="0,50.40 88,57.50 88,59.70 0,52.40" fill="#72a847"/><polygon points="0,52.60 88,59.70 88,61.90 0,54.60" fill="#72a847"/><polygon points="0,60.00 88,66.60 88,70.40 0,63.80" fill="#72a847"/><polygon points="0,68.75 88,76.00 88,78.20 0,71.85" fill="#72a847"/><polygon points="0,77.45 88,85.00 88,86.20 0,79.15" fill="#7cb552"/><rect x="3.0" y="46.5" width="6" height="1" fill="#8cc268"/><rect x="14.0" y="47.5" width="6" height="1" fill="#8cc268"/><rect x="25.0" y="48.5" width="6" height="1" fill="#8cc268"/><rect x="36.0" y="49.5" width="6" height="1" fill="#8cc268"/><rect x="47.0" y="50.5" width="6" height="1" fill="#8cc268"/><rect x="58.0" y="51.5" width="6" height="1" fill="#8cc268"/><rect x="6.0" y="87.5" width="5" height="1" fill="#8cc268"/><rect x="18.0" y="88.5" width="5" height="1" fill="#8cc268"/></g>
<g transform="translate(1342,441)" shape-rendering="crispEdges"><g fill="#b08a3a"><rect x="2" y="-1.1" width="2.1" height="1"/><rect x="5.1" y="-1.1" width="2.1" height="1"/><rect x="24" y="-0.1" width="2.1" height="1"/><rect x="27.1" y="-0.1" width="2.1" height="1"/><rect x="46" y="0.9" width="2.1" height="1"/><rect x="49.1" y="0.9" width="2.1" height="1"/><rect x="68" y="1.9" width="2.1" height="1"/><rect x="71.1" y="1.9" width="2.1" height="1"/><rect x="12" y="3.9" width="2.1" height="1"/><rect x="15.1" y="3.9" width="2.1" height="1"/><rect x="34" y="4.9" width="2.1" height="1"/><rect x="37.1" y="4.9" width="2.1" height="1"/><rect x="56" y="5.9" width="2.1" height="1"/><rect x="59.1" y="5.9" width="2.1" height="1"/></g><polygon points="0,6.5 35,6 35,5.3 77,5.3 77,8 0,8.3" fill="#ae8834"/><polygon points="0,13 53,13 53,12.3 77,12.3 77,15 0,15.6" fill="#6a9a3d"/><g fill="#6a9a3d"><rect x="4.0" y="19.5" width="2.1" height="1"/><rect x="7.1" y="19.5" width="2.1" height="1"/><rect x="26.0" y="20.5" width="2.1" height="1"/><rect x="29.1" y="20.5" width="2.1" height="1"/><rect x="48.0" y="21.5" width="2.1" height="1"/><rect x="51.1" y="21.5" width="2.1" height="1"/><rect x="70.0" y="22.5" width="2.1" height="1"/><rect x="73.1" y="22.5" width="2.1" height="1"/><rect x="0.0" y="24.5" width="2.1" height="1"/><rect x="3.1" y="24.5" width="2.1" height="1"/><rect x="22.0" y="25.5" width="2.1" height="1"/><rect x="25.1" y="25.5" width="2.1" height="1"/><rect x="44.0" y="26.5" width="2.1" height="1"/><rect x="47.1" y="26.5" width="2.1" height="1"/><rect x="66.0" y="27.5" width="2.1" height="1"/><rect x="69.1" y="27.5" width="2.1" height="1"/><rect x="18.0" y="30.5" width="2.1" height="1"/><rect x="21.1" y="30.5" width="2.1" height="1"/><rect x="40.0" y="31.5" width="2.1" height="1"/><rect x="43.1" y="31.5" width="2.1" height="1"/><rect x="62.0" y="32.5" width="2.1" height="1"/><rect x="65.1" y="32.5" width="2.1" height="1"/><rect x="14.0" y="35.5" width="2.1" height="1"/><rect x="17.1" y="35.5" width="2.1" height="1"/><rect x="36.0" y="36.5" width="2.1" height="1"/><rect x="39.1" y="36.5" width="2.1" height="1"/><rect x="58.0" y="37.5" width="2.1" height="1"/><rect x="61.1" y="37.5" width="2.1" height="1"/><rect x="10.0" y="40.5" width="2.1" height="1"/><rect x="13.1" y="40.5" width="2.1" height="1"/><rect x="32.0" y="41.5" width="2.1" height="1"/><rect x="35.1" y="41.5" width="2.1" height="1"/><rect x="54.0" y="42.5" width="2.1" height="1"/><rect x="57.1" y="42.5" width="2.1" height="1"/></g><polygon points="0.0,39.4 24.0,41.1 24.0,42.3 0.0,40.6" fill="#86c85a"/><polygon points="26.0,41.3 50.0,43.0 50.0,44.2 26.0,42.5" fill="#86c85a"/><polygon points="52.0,43.1 76.0,44.8 76.0,46.0 52.0,44.3" fill="#86c85a"/><polygon points="7.0,44.3 31.0,46.0 31.0,47.2 7.0,45.5" fill="#7cc04e"/><polygon points="33.0,46.2 57.0,47.9 57.0,49.1 33.0,47.4" fill="#7cc04e"/><polygon points="59.0,48.0 77.0,49.3 77.0,50.5 59.0,49.2" fill="#7cc04e"/><polygon points="5.0,48.6 29.0,50.3 29.0,51.5 5.0,49.8" fill="#86c85a"/><polygon points="31.0,50.4 55.0,52.1 55.0,53.3 31.0,51.6" fill="#86c85a"/><polygon points="57.0,52.3 77.0,53.7 77.0,54.9 57.0,53.5" fill="#86c85a"/><polygon points="3.0,52.8 27.0,54.5 27.0,55.7 3.0,54.0" fill="#7cc04e"/><polygon points="29.0,54.7 53.0,56.4 53.0,57.6 29.0,55.9" fill="#7cc04e"/><polygon points="55.0,56.5 77.0,58.1 77.0,59.3 55.0,57.7" fill="#7cc04e"/><polygon points="1.0,56.9 25.0,58.6 25.0,60.2 1.0,58.5" fill="#86c85a"/><polygon points="27.0,58.7 51.0,60.4 51.0,62.0 27.0,60.3" fill="#86c85a"/><polygon points="53.0,60.6 77.0,62.3 77.0,63.9 53.0,62.2" fill="#86c85a"/><polygon points="8.0,61.8 32.0,63.5 32.0,65.1 8.0,63.4" fill="#7cc04e"/><polygon points="34.0,63.6 58.0,65.3 58.0,66.9 34.0,65.2" fill="#7cc04e"/><polygon points="60.0,65.5 77.0,66.7 77.0,68.3 60.0,67.1" fill="#7cc04e"/><polygon points="6.0,66.0 30.0,67.7 30.0,69.3 6.0,67.6" fill="#86c85a"/><polygon points="32.0,67.9 56.0,69.6 56.0,71.2 32.0,69.5" fill="#86c85a"/><polygon points="58.0,69.7 77.0,71.1 77.0,72.7 58.0,71.3" fill="#86c85a"/><polygon points="4.0,70.3 28.0,72.0 28.0,73.6 4.0,71.9" fill="#7cc04e"/><polygon points="30.0,72.1 54.0,73.9 54.0,75.5 30.0,73.7" fill="#7cc04e"/><polygon points="56.0,74.0 77.0,75.5 77.0,77.1 56.0,75.6" fill="#7cc04e"/><polygon points="2.0,74.5 26.0,76.3 26.0,77.9 2.0,76.1" fill="#86c85a"/><polygon points="28.0,76.4 52.0,78.1 52.0,79.7 28.0,78.0" fill="#86c85a"/><polygon points="54.0,78.3 77.0,79.9 77.0,81.5 54.0,79.9" fill="#86c85a"/><polygon points="0.0,78.8 24.0,80.5 24.0,82.1 0.0,80.4" fill="#7cc04e"/><polygon points="26.0,80.7 50.0,82.4 50.0,84.0 26.0,82.3" fill="#7cc04e"/><polygon points="52.0,82.5 76.0,84.2 76.0,85.8 52.0,84.1" fill="#7cc04e"/><polygon points="7.0,83.7 31.0,85.4 31.0,87.0 7.0,85.3" fill="#86c85a"/><polygon points="33.0,85.6 57.0,87.3 57.0,88.9 33.0,87.2" fill="#86c85a"/><polygon points="59.0,87.4 77.0,88.7 77.0,90.3 59.0,89.0" fill="#86c85a"/><polygon points="5.0,88.0 29.0,89.7 29.0,91.3 5.0,89.6" fill="#7cc04e"/><polygon points="31.0,89.8 55.0,91.5 55.0,93.1 31.0,91.4" fill="#7cc04e"/><polygon points="57.0,91.7 77.0,93.1 77.0,94.7 57.0,93.3" fill="#7cc04e"/><polygon points="3.0,92.2 27.0,93.9 27.0,95.5 3.0,93.8" fill="#86c85a"/><polygon points="29.0,94.1 53.0,95.8 53.0,97.4 29.0,95.7" fill="#86c85a"/><polygon points="55.0,95.9 77.0,97.5 77.0,99.1 55.0,97.5" fill="#86c85a"/><polygon points="1.0,96.5 25.0,98.2 25.0,99.8 1.0,98.1" fill="#7cc04e"/><polygon points="27.0,98.3 51.0,100.0 51.0,101.6 27.0,99.9" fill="#7cc04e"/><polygon points="53.0,100.2 77.0,101.9 77.0,103.5 53.0,101.8" fill="#7cc04e"/><rect x="0.0" y="45.0" width="2.1" height="1" fill="#5f9436"/><rect x="3.1" y="45.0" width="2.1" height="1" fill="#5f9436"/><rect x="22.0" y="45.5" width="2.1" height="1" fill="#5f9436"/><rect x="25.1" y="45.5" width="2.1" height="1" fill="#5f9436"/><rect x="44.0" y="46.0" width="2.1" height="1" fill="#5f9436"/><rect x="47.1" y="46.0" width="2.1" height="1" fill="#5f9436"/><rect x="66.0" y="46.5" width="2.1" height="1" fill="#5f9436"/><rect x="69.1" y="46.5" width="2.1" height="1" fill="#5f9436"/><rect x="16.0" y="50.5" width="2.1" height="1" fill="#5f9436"/><rect x="19.1" y="50.5" width="2.1" height="1" fill="#5f9436"/><rect x="38.0" y="51.0" width="2.1" height="1" fill="#5f9436"/><rect x="41.1" y="51.0" width="2.1" height="1" fill="#5f9436"/><rect x="60.0" y="51.5" width="2.1" height="1" fill="#5f9436"/><rect x="63.1" y="51.5" width="2.1" height="1" fill="#5f9436"/><rect x="10.0" y="55.5" width="2.1" height="1" fill="#5f9436"/><rect x="13.1" y="55.5" width="2.1" height="1" fill="#5f9436"/><rect x="32.0" y="56.0" width="2.1" height="1" fill="#5f9436"/><rect x="35.1" y="56.0" width="2.1" height="1" fill="#5f9436"/><rect x="54.0" y="56.5" width="2.1" height="1" fill="#5f9436"/><rect x="57.1" y="56.5" width="2.1" height="1" fill="#5f9436"/><rect x="4.0" y="60.5" width="2.1" height="1" fill="#5f9436"/><rect x="7.1" y="60.5" width="2.1" height="1" fill="#5f9436"/><rect x="26.0" y="61.0" width="2.1" height="1" fill="#5f9436"/><rect x="29.1" y="61.0" width="2.1" height="1" fill="#5f9436"/><rect x="48.0" y="61.5" width="2.1" height="1" fill="#5f9436"/><rect x="51.1" y="61.5" width="2.1" height="1" fill="#5f9436"/><rect x="70.0" y="62.0" width="2.1" height="1" fill="#5f9436"/><rect x="73.1" y="62.0" width="2.1" height="1" fill="#5f9436"/><rect x="20.0" y="66.0" width="2.1" height="1" fill="#5f9436"/><rect x="23.1" y="66.0" width="2.1" height="1" fill="#5f9436"/><rect x="42.0" y="66.5" width="2.1" height="1" fill="#5f9436"/><rect x="45.1" y="66.5" width="2.1" height="1" fill="#5f9436"/><rect x="64.0" y="67.0" width="2.1" height="1" fill="#5f9436"/><rect x="67.1" y="67.0" width="2.1" height="1" fill="#5f9436"/><rect x="14.0" y="71.0" width="2.1" height="1" fill="#5f9436"/><rect x="17.1" y="71.0" width="2.1" height="1" fill="#5f9436"/><rect x="36.0" y="71.5" width="2.1" height="1" fill="#5f9436"/><rect x="39.1" y="71.5" width="2.1" height="1" fill="#5f9436"/><rect x="58.0" y="72.0" width="2.1" height="1" fill="#5f9436"/><rect x="61.1" y="72.0" width="2.1" height="1" fill="#5f9436"/><rect x="8.0" y="76.0" width="2.1" height="1" fill="#5f9436"/><rect x="11.1" y="76.0" width="2.1" height="1" fill="#5f9436"/><rect x="30.0" y="76.5" width="2.1" height="1" fill="#5f9436"/><rect x="33.1" y="76.5" width="2.1" height="1" fill="#5f9436"/><rect x="52.0" y="77.0" width="2.1" height="1" fill="#5f9436"/><rect x="55.1" y="77.0" width="2.1" height="1" fill="#5f9436"/><rect x="2.0" y="81.0" width="2.1" height="1" fill="#5f9436"/><rect x="5.1" y="81.0" width="2.1" height="1" fill="#5f9436"/><rect x="24.0" y="81.5" width="2.1" height="1" fill="#5f9436"/><rect x="27.1" y="81.5" width="2.1" height="1" fill="#5f9436"/><rect x="46.0" y="82.0" width="2.1" height="1" fill="#5f9436"/><rect x="49.1" y="82.0" width="2.1" height="1" fill="#5f9436"/><rect x="68.0" y="82.5" width="2.1" height="1" fill="#5f9436"/><rect x="71.1" y="82.5" width="2.1" height="1" fill="#5f9436"/></g>
<g transform="translate(1950,441)" shape-rendering="crispEdges"><g fill="#b08a3a"><rect x="2" y="-1.1" width="2.1" height="1"/><rect x="5.1" y="-1.1" width="2.1" height="1"/><rect x="24" y="-0.1" width="2.1" height="1"/><rect x="27.1" y="-0.1" width="2.1" height="1"/><rect x="46" y="0.9" width="2.1" height="1"/><rect x="49.1" y="0.9" width="2.1" height="1"/><rect x="68" y="1.9" width="2.1" height="1"/><rect x="71.1" y="1.9" width="2.1" height="1"/><rect x="12" y="3.9" width="2.1" height="1"/><rect x="15.1" y="3.9" width="2.1" height="1"/><rect x="34" y="4.9" width="2.1" height="1"/><rect x="37.1" y="4.9" width="2.1" height="1"/><rect x="56" y="5.9" width="2.1" height="1"/><rect x="59.1" y="5.9" width="2.1" height="1"/></g><polygon points="0,6.5 35,6 35,5.3 77,5.3 77,8 0,8.3" fill="#ae8834"/><polygon points="0,13 53,13 53,12.3 77,12.3 77,15 0,15.6" fill="#6a9a3d"/><g fill="#6a9a3d"><rect x="4.0" y="19.5" width="2.1" height="1"/><rect x="7.1" y="19.5" width="2.1" height="1"/><rect x="26.0" y="20.5" width="2.1" height="1"/><rect x="29.1" y="20.5" width="2.1" height="1"/><rect x="48.0" y="21.5" width="2.1" height="1"/><rect x="51.1" y="21.5" width="2.1" height="1"/><rect x="70.0" y="22.5" width="2.1" height="1"/><rect x="73.1" y="22.5" width="2.1" height="1"/><rect x="0.0" y="24.5" width="2.1" height="1"/><rect x="3.1" y="24.5" width="2.1" height="1"/><rect x="22.0" y="25.5" width="2.1" height="1"/><rect x="25.1" y="25.5" width="2.1" height="1"/><rect x="44.0" y="26.5" width="2.1" height="1"/><rect x="47.1" y="26.5" width="2.1" height="1"/><rect x="66.0" y="27.5" width="2.1" height="1"/><rect x="69.1" y="27.5" width="2.1" height="1"/><rect x="18.0" y="30.5" width="2.1" height="1"/><rect x="21.1" y="30.5" width="2.1" height="1"/><rect x="40.0" y="31.5" width="2.1" height="1"/><rect x="43.1" y="31.5" width="2.1" height="1"/><rect x="62.0" y="32.5" width="2.1" height="1"/><rect x="65.1" y="32.5" width="2.1" height="1"/><rect x="14.0" y="35.5" width="2.1" height="1"/><rect x="17.1" y="35.5" width="2.1" height="1"/><rect x="36.0" y="36.5" width="2.1" height="1"/><rect x="39.1" y="36.5" width="2.1" height="1"/><rect x="58.0" y="37.5" width="2.1" height="1"/><rect x="61.1" y="37.5" width="2.1" height="1"/><rect x="10.0" y="40.5" width="2.1" height="1"/><rect x="13.1" y="40.5" width="2.1" height="1"/><rect x="32.0" y="41.5" width="2.1" height="1"/><rect x="35.1" y="41.5" width="2.1" height="1"/><rect x="54.0" y="42.5" width="2.1" height="1"/><rect x="57.1" y="42.5" width="2.1" height="1"/></g><polygon points="0.0,39.4 24.0,41.1 24.0,42.3 0.0,40.6" fill="#86c85a"/><polygon points="26.0,41.3 50.0,43.0 50.0,44.2 26.0,42.5" fill="#86c85a"/><polygon points="52.0,43.1 76.0,44.8 76.0,46.0 52.0,44.3" fill="#86c85a"/><polygon points="7.0,44.3 31.0,46.0 31.0,47.2 7.0,45.5" fill="#7cc04e"/><polygon points="33.0,46.2 57.0,47.9 57.0,49.1 33.0,47.4" fill="#7cc04e"/><polygon points="59.0,48.0 77.0,49.3 77.0,50.5 59.0,49.2" fill="#7cc04e"/><polygon points="5.0,48.6 29.0,50.3 29.0,51.5 5.0,49.8" fill="#86c85a"/><polygon points="31.0,50.4 55.0,52.1 55.0,53.3 31.0,51.6" fill="#86c85a"/><polygon points="57.0,52.3 77.0,53.7 77.0,54.9 57.0,53.5" fill="#86c85a"/><polygon points="3.0,52.8 27.0,54.5 27.0,55.7 3.0,54.0" fill="#7cc04e"/><polygon points="29.0,54.7 53.0,56.4 53.0,57.6 29.0,55.9" fill="#7cc04e"/><polygon points="55.0,56.5 77.0,58.1 77.0,59.3 55.0,57.7" fill="#7cc04e"/><polygon points="1.0,56.9 25.0,58.6 25.0,60.2 1.0,58.5" fill="#86c85a"/><polygon points="27.0,58.7 51.0,60.4 51.0,62.0 27.0,60.3" fill="#86c85a"/><polygon points="53.0,60.6 77.0,62.3 77.0,63.9 53.0,62.2" fill="#86c85a"/><polygon points="8.0,61.8 32.0,63.5 32.0,65.1 8.0,63.4" fill="#7cc04e"/><polygon points="34.0,63.6 58.0,65.3 58.0,66.9 34.0,65.2" fill="#7cc04e"/><polygon points="60.0,65.5 77.0,66.7 77.0,68.3 60.0,67.1" fill="#7cc04e"/><polygon points="6.0,66.0 30.0,67.7 30.0,69.3 6.0,67.6" fill="#86c85a"/><polygon points="32.0,67.9 56.0,69.6 56.0,71.2 32.0,69.5" fill="#86c85a"/><polygon points="58.0,69.7 77.0,71.1 77.0,72.7 58.0,71.3" fill="#86c85a"/><polygon points="4.0,70.3 28.0,72.0 28.0,73.6 4.0,71.9" fill="#7cc04e"/><polygon points="30.0,72.1 54.0,73.9 54.0,75.5 30.0,73.7" fill="#7cc04e"/><polygon points="56.0,74.0 77.0,75.5 77.0,77.1 56.0,75.6" fill="#7cc04e"/><polygon points="2.0,74.5 26.0,76.3 26.0,77.9 2.0,76.1" fill="#86c85a"/><polygon points="28.0,76.4 52.0,78.1 52.0,79.7 28.0,78.0" fill="#86c85a"/><polygon points="54.0,78.3 77.0,79.9 77.0,81.5 54.0,79.9" fill="#86c85a"/><polygon points="0.0,78.8 24.0,80.5 24.0,82.1 0.0,80.4" fill="#7cc04e"/><polygon points="26.0,80.7 50.0,82.4 50.0,84.0 26.0,82.3" fill="#7cc04e"/><polygon points="52.0,82.5 76.0,84.2 76.0,85.8 52.0,84.1" fill="#7cc04e"/><polygon points="7.0,83.7 31.0,85.4 31.0,87.0 7.0,85.3" fill="#86c85a"/><polygon points="33.0,85.6 57.0,87.3 57.0,88.9 33.0,87.2" fill="#86c85a"/><polygon points="59.0,87.4 77.0,88.7 77.0,90.3 59.0,89.0" fill="#86c85a"/><polygon points="5.0,88.0 29.0,89.7 29.0,91.3 5.0,89.6" fill="#7cc04e"/><polygon points="31.0,89.8 55.0,91.5 55.0,93.1 31.0,91.4" fill="#7cc04e"/><polygon points="57.0,91.7 77.0,93.1 77.0,94.7 57.0,93.3" fill="#7cc04e"/><polygon points="3.0,92.2 27.0,93.9 27.0,95.5 3.0,93.8" fill="#86c85a"/><polygon points="29.0,94.1 53.0,95.8 53.0,97.4 29.0,95.7" fill="#86c85a"/><polygon points="55.0,95.9 77.0,97.5 77.0,99.1 55.0,97.5" fill="#86c85a"/><polygon points="1.0,96.5 25.0,98.2 25.0,99.8 1.0,98.1" fill="#7cc04e"/><polygon points="27.0,98.3 51.0,100.0 51.0,101.6 27.0,99.9" fill="#7cc04e"/><polygon points="53.0,100.2 77.0,101.9 77.0,103.5 53.0,101.8" fill="#7cc04e"/><rect x="0.0" y="45.0" width="2.1" height="1" fill="#5f9436"/><rect x="3.1" y="45.0" width="2.1" height="1" fill="#5f9436"/><rect x="22.0" y="45.5" width="2.1" height="1" fill="#5f9436"/><rect x="25.1" y="45.5" width="2.1" height="1" fill="#5f9436"/><rect x="44.0" y="46.0" width="2.1" height="1" fill="#5f9436"/><rect x="47.1" y="46.0" width="2.1" height="1" fill="#5f9436"/><rect x="66.0" y="46.5" width="2.1" height="1" fill="#5f9436"/><rect x="69.1" y="46.5" width="2.1" height="1" fill="#5f9436"/><rect x="16.0" y="50.5" width="2.1" height="1" fill="#5f9436"/><rect x="19.1" y="50.5" width="2.1" height="1" fill="#5f9436"/><rect x="38.0" y="51.0" width="2.1" height="1" fill="#5f9436"/><rect x="41.1" y="51.0" width="2.1" height="1" fill="#5f9436"/><rect x="60.0" y="51.5" width="2.1" height="1" fill="#5f9436"/><rect x="63.1" y="51.5" width="2.1" height="1" fill="#5f9436"/><rect x="10.0" y="55.5" width="2.1" height="1" fill="#5f9436"/><rect x="13.1" y="55.5" width="2.1" height="1" fill="#5f9436"/><rect x="32.0" y="56.0" width="2.1" height="1" fill="#5f9436"/><rect x="35.1" y="56.0" width="2.1" height="1" fill="#5f9436"/><rect x="54.0" y="56.5" width="2.1" height="1" fill="#5f9436"/><rect x="57.1" y="56.5" width="2.1" height="1" fill="#5f9436"/><rect x="4.0" y="60.5" width="2.1" height="1" fill="#5f9436"/><rect x="7.1" y="60.5" width="2.1" height="1" fill="#5f9436"/><rect x="26.0" y="61.0" width="2.1" height="1" fill="#5f9436"/><rect x="29.1" y="61.0" width="2.1" height="1" fill="#5f9436"/><rect x="48.0" y="61.5" width="2.1" height="1" fill="#5f9436"/><rect x="51.1" y="61.5" width="2.1" height="1" fill="#5f9436"/><rect x="70.0" y="62.0" width="2.1" height="1" fill="#5f9436"/><rect x="73.1" y="62.0" width="2.1" height="1" fill="#5f9436"/><rect x="20.0" y="66.0" width="2.1" height="1" fill="#5f9436"/><rect x="23.1" y="66.0" width="2.1" height="1" fill="#5f9436"/><rect x="42.0" y="66.5" width="2.1" height="1" fill="#5f9436"/><rect x="45.1" y="66.5" width="2.1" height="1" fill="#5f9436"/><rect x="64.0" y="67.0" width="2.1" height="1" fill="#5f9436"/><rect x="67.1" y="67.0" width="2.1" height="1" fill="#5f9436"/><rect x="14.0" y="71.0" width="2.1" height="1" fill="#5f9436"/><rect x="17.1" y="71.0" width="2.1" height="1" fill="#5f9436"/><rect x="36.0" y="71.5" width="2.1" height="1" fill="#5f9436"/><rect x="39.1" y="71.5" width="2.1" height="1" fill="#5f9436"/><rect x="58.0" y="72.0" width="2.1" height="1" fill="#5f9436"/><rect x="61.1" y="72.0" width="2.1" height="1" fill="#5f9436"/><rect x="8.0" y="76.0" width="2.1" height="1" fill="#5f9436"/><rect x="11.1" y="76.0" width="2.1" height="1" fill="#5f9436"/><rect x="30.0" y="76.5" width="2.1" height="1" fill="#5f9436"/><rect x="33.1" y="76.5" width="2.1" height="1" fill="#5f9436"/><rect x="52.0" y="77.0" width="2.1" height="1" fill="#5f9436"/><rect x="55.1" y="77.0" width="2.1" height="1" fill="#5f9436"/><rect x="2.0" y="81.0" width="2.1" height="1" fill="#5f9436"/><rect x="5.1" y="81.0" width="2.1" height="1" fill="#5f9436"/><rect x="24.0" y="81.5" width="2.1" height="1" fill="#5f9436"/><rect x="27.1" y="81.5" width="2.1" height="1" fill="#5f9436"/><rect x="46.0" y="82.0" width="2.1" height="1" fill="#5f9436"/><rect x="49.1" y="82.0" width="2.1" height="1" fill="#5f9436"/><rect x="68.0" y="82.5" width="2.1" height="1" fill="#5f9436"/><rect x="71.1" y="82.5" width="2.1" height="1" fill="#5f9436"/></g>
<text x="299.5" y="473.4" font-size="23.55" fill="#8a8a8a" textLength="100.0" lengthAdjust="spacingAndGlyphs">Greetings</text>
<text x="909.8" y="473.4" font-size="23.55" fill="#8a8a8a" textLength="78.0" lengthAdjust="spacingAndGlyphs">Name *</text>
<text x="1519.6" y="473.4" font-size="23.55" fill="#8a8a8a" textLength="110.8" lengthAdjust="spacingAndGlyphs">Last name</text>
<text x="300.0" y="521.4" font-size="35.76" fill="#0a0a0a" textLength="43.8" lengthAdjust="spacingAndGlyphs">Mr.</text>
<text x="909.8" y="521.4" font-size="35.76" fill="#0a0a0a" textLength="94.4" lengthAdjust="spacingAndGlyphs">Carlos</text>
<text x="1520.3" y="521.4" font-size="35.76" fill="#0a0a0a" textLength="93.3" lengthAdjust="spacingAndGlyphs">Brown</text>
<polyline points="752.5,500.5 768.3,515.9 784.1,500.5" fill="none" stroke="#000" stroke-width="2.45" stroke-linecap="round"/>
<rect x="283" y="696" width="524" height="2" fill="#8a8a8a"/>
<rect x="894" y="696" width="523" height="2" fill="#8a8a8a"/>
<rect x="1504" y="696" width="523" height="2" fill="#8a8a8a"/>
<g transform="translate(196,591)" shape-rendering="crispEdges"><rect x="0" y="0.2" width="25" height="2.8" fill="#6a9a3d"/><rect x="25" y="-0.2" width="63" height="2.6" fill="#6a9a3d"/><g fill="#6a9a3d"><rect x="57.8" y="3.0" width="2.1" height="1" /><rect x="60.9" y="3.0" width="2.1" height="1" /><rect x="69.8" y="4.0" width="2.1" height="1" /><rect x="72.8" y="4.0" width="2.1" height="1" /><rect x="81.8" y="5.0" width="2.1" height="1" /><rect x="84.8" y="5.0" width="2.1" height="1" /><rect x="5.9" y="7.0" width="2.1" height="1" /><rect x="9.0" y="7.0" width="2.1" height="1" /><rect x="17.9" y="8.1" width="2.1" height="1" /><rect x="21.0" y="8.1" width="2.1" height="1" /><rect x="29.9" y="9.1" width="2.1" height="1" /><rect x="33.0" y="9.1" width="2.1" height="1" /><rect x="41.9" y="10.1" width="2.1" height="1" /><rect x="45.0" y="10.1" width="2.1" height="1" /><rect x="53.9" y="11.1" width="2.1" height="1" /><rect x="57.0" y="11.1" width="2.1" height="1" /><rect x="65.9" y="12.1" width="2.1" height="1" /><rect x="69.0" y="12.1" width="2.1" height="1" /><rect x="77.9" y="13.1" width="2.1" height="1" /><rect x="81.0" y="13.1" width="2.1" height="1" /><rect x="2.1" y="15.1" width="2.1" height="1" /><rect x="5.2" y="15.1" width="2.1" height="1" /><rect x="14.1" y="16.1" width="2.1" height="1" /><rect x="17.2" y="16.1" width="2.1" height="1" /><rect x="26.1" y="17.1" width="2.1" height="1" /><rect x="29.2" y="17.1" width="2.1" height="1" /><rect x="38.0" y="18.1" width="2.1" height="1" /><rect x="41.1" y="18.1" width="2.1" height="1" /><rect x="50.0" y="19.1" width="2.1" height="1" /><rect x="53.1" y="19.1" width="2.1" height="1" /><rect x="62.0" y="20.1" width="2.1" height="1" /><rect x="65.1" y="20.1" width="2.1" height="1" /><rect x="74.0" y="21.1" width="2.1" height="1" /><rect x="77.1" y="21.1" width="2.1" height="1" /><rect x="10.2" y="24.1" width="2.1" height="1" /><rect x="13.3" y="24.1" width="2.1" height="1" /><rect x="22.2" y="25.1" width="2.1" height="1" /><rect x="25.3" y="25.1" width="2.1" height="1" /><rect x="34.2" y="26.1" width="2.1" height="1" /><rect x="37.3" y="26.1" width="2.1" height="1" /><rect x="46.2" y="27.1" width="2.1" height="1" /><rect x="49.3" y="27.1" width="2.1" height="1" /><rect x="58.2" y="28.1" width="2.1" height="1" /><rect x="61.3" y="28.1" width="2.1" height="1" /><rect x="70.2" y="29.1" width="2.1" height="1" /><rect x="73.3" y="29.1" width="2.1" height="1" /><rect x="82.2" y="30.1" width="2.1" height="1" /><rect x="85.3" y="30.1" width="2.1" height="1" /><rect x="6.3" y="32.0" width="2.1" height="1" /><rect x="9.4" y="32.0" width="2.1" height="1" /><rect x="18.4" y="33.0" width="2.1" height="1" /><rect x="21.5" y="33.0" width="2.1" height="1" /><rect x="30.4" y="34.0" width="2.1" height="1" /><rect x="33.5" y="34.0" width="2.1" height="1" /><rect x="42.4" y="35.0" width="2.1" height="1" /><rect x="45.5" y="35.0" width="2.1" height="1" /><rect x="54.4" y="36.0" width="2.1" height="1" /><rect x="57.5" y="36.0" width="2.1" height="1" /><rect x="66.3" y="37.0" width="2.1" height="1" /><rect x="69.4" y="37.0" width="2.1" height="1" /><rect x="78.3" y="38.0" width="2.1" height="1" /><rect x="81.4" y="38.0" width="2.1" height="1" /><rect x="2.5" y="40.0" width="2.1" height="1" /><rect x="5.6" y="40.0" width="2.1" height="1" /><rect x="14.5" y="41.0" width="2.1" height="1" /><rect x="17.6" y="41.0" width="2.1" height="1" /><rect x="26.5" y="42.0" width="2.1" height="1" /><rect x="29.6" y="42.0" width="2.1" height="1" /><rect x="38.5" y="43.0" width="2.1" height="1" /><rect x="41.6" y="43.0" width="2.1" height="1" /><rect x="50.5" y="44.0" width="2.1" height="1" /><rect x="53.6" y="44.0" width="2.1" height="1" /><rect x="62.5" y="45.0" width="2.1" height="1" /><rect x="65.6" y="45.0" width="2.1" height="1" /><rect x="74.5" y="46.0" width="2.1" height="1" /><rect x="77.6" y="46.0" width="2.1" height="1" /><rect x="10.7" y="49.0" width="2.1" height="1" /><rect x="13.8" y="49.0" width="2.1" height="1" /><rect x="22.6" y="50.0" width="2.1" height="1" /><rect x="25.8" y="50.0" width="2.1" height="1" /><rect x="34.6" y="51.0" width="2.1" height="1" /><rect x="37.8" y="51.0" width="2.1" height="1" /><rect x="46.6" y="52.0" width="2.1" height="1" /><rect x="49.8" y="52.0" width="2.1" height="1" /><rect x="58.6" y="53.0" width="2.1" height="1" /><rect x="61.8" y="53.0" width="2.1" height="1" /><rect x="70.7" y="54.0" width="2.1" height="1" /><rect x="73.8" y="54.0" width="2.1" height="1" /><rect x="82.7" y="55.0" width="2.1" height="1" /><rect x="85.8" y="55.0" width="2.1" height="1" /><rect x="6.8" y="57.0" width="2.1" height="1" /><rect x="9.9" y="57.0" width="2.1" height="1" /><rect x="18.8" y="58.0" width="2.1" height="1" /><rect x="21.9" y="58.0" width="2.1" height="1" /><rect x="30.8" y="59.0" width="2.1" height="1" /><rect x="33.9" y="59.0" width="2.1" height="1" /><rect x="42.8" y="60.0" width="2.1" height="1" /><rect x="45.9" y="60.0" width="2.1" height="1" /><rect x="54.8" y="61.0" width="2.1" height="1" /><rect x="57.9" y="61.0" width="2.1" height="1" /><rect x="66.8" y="62.0" width="2.1" height="1" /><rect x="69.9" y="62.0" width="2.1" height="1" /><rect x="78.8" y="63.0" width="2.1" height="1" /><rect x="81.9" y="63.0" width="2.1" height="1" /><rect x="3.0" y="65.0" width="2.1" height="1" /><rect x="6.1" y="65.0" width="2.1" height="1" /><rect x="15.0" y="66.0" width="2.1" height="1" /><rect x="18.1" y="66.0" width="2.1" height="1" /><rect x="27.0" y="67.0" width="2.1" height="1" /><rect x="30.1" y="67.0" width="2.1" height="1" /><rect x="39.0" y="68.0" width="2.1" height="1" /><rect x="42.1" y="68.0" width="2.1" height="1" /><rect x="51.0" y="69.0" width="2.1" height="1" /><rect x="54.1" y="69.0" width="2.1" height="1" /><rect x="63.0" y="70.0" width="2.1" height="1" /><rect x="66.0" y="70.0" width="2.1" height="1" /><rect x="75.0" y="71.0" width="2.1" height="1" /><rect x="78.0" y="71.0" width="2.1" height="1" /><rect x="-0.9" y="73.0" width="2.1" height="1" /><rect x="2.2" y="73.0" width="2.1" height="1" /><rect x="11.1" y="74.0" width="2.1" height="1" /><rect x="14.2" y="74.0" width="2.1" height="1" /><rect x="23.1" y="75.0" width="2.1" height="1" /><rect x="26.2" y="75.0" width="2.1" height="1" /><rect x="35.1" y="76.0" width="2.1" height="1" /><rect x="38.2" y="76.0" width="2.1" height="1" /><rect x="47.1" y="77.0" width="2.1" height="1" /><rect x="50.2" y="77.0" width="2.1" height="1" /><rect x="59.1" y="78.0" width="2.1" height="1" /><rect x="62.2" y="78.0" width="2.1" height="1" /><rect x="71.1" y="79.0" width="2.1" height="1" /><rect x="74.2" y="79.0" width="2.1" height="1" /><rect x="83.1" y="80.0" width="2.1" height="1" /><rect x="86.2" y="80.0" width="2.1" height="1" /><rect x="7.2" y="82.0" width="2.1" height="1" /><rect x="10.3" y="82.0" width="2.1" height="1" /><rect x="19.2" y="83.0" width="2.1" height="1" /><rect x="22.4" y="83.0" width="2.1" height="1" /><rect x="31.2" y="84.0" width="2.1" height="1" /><rect x="34.4" y="84.0" width="2.1" height="1" /><rect x="43.2" y="85.0" width="2.1" height="1" /><rect x="46.4" y="85.0" width="2.1" height="1" /><rect x="55.2" y="86.0" width="2.1" height="1" /><rect x="58.4" y="86.0" width="2.1" height="1" /><rect x="67.2" y="87.0" width="2.1" height="1" /><rect x="70.3" y="87.0" width="2.1" height="1" /><rect x="79.2" y="88.0" width="2.1" height="1" /><rect x="82.3" y="88.0" width="2.1" height="1" /><rect x="3.4" y="90.0" width="2.1" height="1" /><rect x="6.5" y="90.0" width="2.1" height="1" /><rect x="15.4" y="91.0" width="2.1" height="1" /><rect x="18.5" y="91.0" width="2.1" height="1" /><rect x="27.4" y="92.0" width="2.1" height="1" /><rect x="30.5" y="92.0" width="2.1" height="1" /><rect x="39.4" y="93.0" width="2.1" height="1" /><rect x="42.5" y="93.0" width="2.1" height="1" /><rect x="51.4" y="94.0" width="2.1" height="1" /><rect x="54.5" y="94.0" width="2.1" height="1" /><rect x="63.4" y="95.0" width="2.1" height="1" /><rect x="66.5" y="95.0" width="2.1" height="1" /><rect x="75.4" y="96.0" width="2.1" height="1" /><rect x="78.5" y="96.0" width="2.1" height="1" /><rect x="-0.5" y="98.0" width="2.1" height="1" /><rect x="2.6" y="98.0" width="2.1" height="1" /><rect x="11.5" y="99.0" width="2.1" height="1" /><rect x="14.6" y="99.0" width="2.1" height="1" /><rect x="23.5" y="100.0" width="2.1" height="1" /><rect x="26.6" y="100.0" width="2.1" height="1" /><rect x="35.5" y="101.0" width="2.1" height="1" /><rect x="38.6" y="101.0" width="2.1" height="1" /><rect x="47.5" y="102.0" width="2.1" height="1" /><rect x="50.6" y="102.0" width="2.1" height="1" /><rect x="59.5" y="103.0" width="2.1" height="1" /><rect x="62.6" y="103.0" width="2.1" height="1" /><rect x="71.5" y="104.0" width="2.1" height="1" /><rect x="74.6" y="104.0" width="2.1" height="1" /></g><polygon points="6.6,26.12 88,32.00 88,34.00 6.6,27.12" fill="#86bd5e"/><polygon points="0,32.90 88,40.20 88,43.00 0,34.90" fill="#72a847"/><polygon points="0,41.75 88,48.95 88,52.45 0,44.25" fill="#72a847"/><polygon points="0,50.40 88,57.50 88,59.70 0,52.40" fill="#72a847"/><polygon points="0,52.60 88,59.70 88,61.90 0,54.60" fill="#72a847"/><polygon points="0,60.00 88,66.60 88,70.40 0,63.80" fill="#72a847"/><polygon points="0,68.75 88,76.00 88,78.20 0,71.85" fill="#72a847"/><polygon points="0,77.45 88,85.00 88,86.20 0,79.15" fill="#7cb552"/><rect x="3.0" y="46.5" width="6" height="1" fill="#8cc268"/><rect x="14.0" y="47.5" width="6" height="1" fill="#8cc268"/><rect x="25.0" y="48.5" width="6" height="1" fill="#8cc268"/><rect x="36.0" y="49.5" width="6" height="1" fill="#8cc268"/><rect x="47.0" y="50.5" width="6" height="1" fill="#8cc268"/><rect x="58.0" y="51.5" width="6" height="1" fill="#8cc268"/><rect x="6.0" y="87.5" width="5" height="1" fill="#8cc268"/><rect x="18.0" y="88.5" width="5" height="1" fill="#8cc268"/></g>
<g transform="translate(806,591)" shape-rendering="crispEdges"><rect x="0" y="0.2" width="25" height="2.8" fill="#6a9a3d"/><rect x="25" y="-0.2" width="63" height="2.6" fill="#6a9a3d"/><g fill="#6a9a3d"><rect x="57.8" y="3.0" width="2.1" height="1" /><rect x="60.9" y="3.0" width="2.1" height="1" /><rect x="69.8" y="4.0" width="2.1" height="1" /><rect x="72.8" y="4.0" width="2.1" height="1" /><rect x="81.8" y="5.0" width="2.1" height="1" /><rect x="84.8" y="5.0" width="2.1" height="1" /><rect x="5.9" y="7.0" width="2.1" height="1" /><rect x="9.0" y="7.0" width="2.1" height="1" /><rect x="17.9" y="8.1" width="2.1" height="1" /><rect x="21.0" y="8.1" width="2.1" height="1" /><rect x="29.9" y="9.1" width="2.1" height="1" /><rect x="33.0" y="9.1" width="2.1" height="1" /><rect x="41.9" y="10.1" width="2.1" height="1" /><rect x="45.0" y="10.1" width="2.1" height="1" /><rect x="53.9" y="11.1" width="2.1" height="1" /><rect x="57.0" y="11.1" width="2.1" height="1" /><rect x="65.9" y="12.1" width="2.1" height="1" /><rect x="69.0" y="12.1" width="2.1" height="1" /><rect x="77.9" y="13.1" width="2.1" height="1" /><rect x="81.0" y="13.1" width="2.1" height="1" /><rect x="2.1" y="15.1" width="2.1" height="1" /><rect x="5.2" y="15.1" width="2.1" height="1" /><rect x="14.1" y="16.1" width="2.1" height="1" /><rect x="17.2" y="16.1" width="2.1" height="1" /><rect x="26.1" y="17.1" width="2.1" height="1" /><rect x="29.2" y="17.1" width="2.1" height="1" /><rect x="38.0" y="18.1" width="2.1" height="1" /><rect x="41.1" y="18.1" width="2.1" height="1" /><rect x="50.0" y="19.1" width="2.1" height="1" /><rect x="53.1" y="19.1" width="2.1" height="1" /><rect x="62.0" y="20.1" width="2.1" height="1" /><rect x="65.1" y="20.1" width="2.1" height="1" /><rect x="74.0" y="21.1" width="2.1" height="1" /><rect x="77.1" y="21.1" width="2.1" height="1" /><rect x="10.2" y="24.1" width="2.1" height="1" /><rect x="13.3" y="24.1" width="2.1" height="1" /><rect x="22.2" y="25.1" width="2.1" height="1" /><rect x="25.3" y="25.1" width="2.1" height="1" /><rect x="34.2" y="26.1" width="2.1" height="1" /><rect x="37.3" y="26.1" width="2.1" height="1" /><rect x="46.2" y="27.1" width="2.1" height="1" /><rect x="49.3" y="27.1" width="2.1" height="1" /><rect x="58.2" y="28.1" width="2.1" height="1" /><rect x="61.3" y="28.1" width="2.1" height="1" /><rect x="70.2" y="29.1" width="2.1" height="1" /><rect x="73.3" y="29.1" width="2.1" height="1" /><rect x="82.2" y="30.1" width="2.1" height="1" /><rect x="85.3" y="30.1" width="2.1" height="1" /><rect x="6.3" y="32.0" width="2.1" height="1" /><rect x="9.4" y="32.0" width="2.1" height="1" /><rect x="18.4" y="33.0" width="2.1" height="1" /><rect x="21.5" y="33.0" width="2.1" height="1" /><rect x="30.4" y="34.0" width="2.1" height="1" /><rect x="33.5" y="34.0" width="2.1" height="1" /><rect x="42.4" y="35.0" width="2.1" height="1" /><rect x="45.5" y="35.0" width="2.1" height="1" /><rect x="54.4" y="36.0" width="2.1" height="1" /><rect x="57.5" y="36.0" width="2.1" height="1" /><rect x="66.3" y="37.0" width="2.1" height="1" /><rect x="69.4" y="37.0" width="2.1" height="1" /><rect x="78.3" y="38.0" width="2.1" height="1" /><rect x="81.4" y="38.0" width="2.1" height="1" /><rect x="2.5" y="40.0" width="2.1" height="1" /><rect x="5.6" y="40.0" width="2.1" height="1" /><rect x="14.5" y="41.0" width="2.1" height="1" /><rect x="17.6" y="41.0" width="2.1" height="1" /><rect x="26.5" y="42.0" width="2.1" height="1" /><rect x="29.6" y="42.0" width="2.1" height="1" /><rect x="38.5" y="43.0" width="2.1" height="1" /><rect x="41.6" y="43.0" width="2.1" height="1" /><rect x="50.5" y="44.0" width="2.1" height="1" /><rect x="53.6" y="44.0" width="2.1" height="1" /><rect x="62.5" y="45.0" width="2.1" height="1" /><rect x="65.6" y="45.0" width="2.1" height="1" /><rect x="74.5" y="46.0" width="2.1" height="1" /><rect x="77.6" y="46.0" width="2.1" height="1" /><rect x="10.7" y="49.0" width="2.1" height="1" /><rect x="13.8" y="49.0" width="2.1" height="1" /><rect x="22.6" y="50.0" width="2.1" height="1" /><rect x="25.8" y="50.0" width="2.1" height="1" /><rect x="34.6" y="51.0" width="2.1" height="1" /><rect x="37.8" y="51.0" width="2.1" height="1" /><rect x="46.6" y="52.0" width="2.1" height="1" /><rect x="49.8" y="52.0" width="2.1" height="1" /><rect x="58.6" y="53.0" width="2.1" height="1" /><rect x="61.8" y="53.0" width="2.1" height="1" /><rect x="70.7" y="54.0" width="2.1" height="1" /><rect x="73.8" y="54.0" width="2.1" height="1" /><rect x="82.7" y="55.0" width="2.1" height="1" /><rect x="85.8" y="55.0" width="2.1" height="1" /><rect x="6.8" y="57.0" width="2.1" height="1" /><rect x="9.9" y="57.0" width="2.1" height="1" /><rect x="18.8" y="58.0" width="2.1" height="1" /><rect x="21.9" y="58.0" width="2.1" height="1" /><rect x="30.8" y="59.0" width="2.1" height="1" /><rect x="33.9" y="59.0" width="2.1" height="1" /><rect x="42.8" y="60.0" width="2.1" height="1" /><rect x="45.9" y="60.0" width="2.1" height="1" /><rect x="54.8" y="61.0" width="2.1" height="1" /><rect x="57.9" y="61.0" width="2.1" height="1" /><rect x="66.8" y="62.0" width="2.1" height="1" /><rect x="69.9" y="62.0" width="2.1" height="1" /><rect x="78.8" y="63.0" width="2.1" height="1" /><rect x="81.9" y="63.0" width="2.1" height="1" /><rect x="3.0" y="65.0" width="2.1" height="1" /><rect x="6.1" y="65.0" width="2.1" height="1" /><rect x="15.0" y="66.0" width="2.1" height="1" /><rect x="18.1" y="66.0" width="2.1" height="1" /><rect x="27.0" y="67.0" width="2.1" height="1" /><rect x="30.1" y="67.0" width="2.1" height="1" /><rect x="39.0" y="68.0" width="2.1" height="1" /><rect x="42.1" y="68.0" width="2.1" height="1" /><rect x="51.0" y="69.0" width="2.1" height="1" /><rect x="54.1" y="69.0" width="2.1" height="1" /><rect x="63.0" y="70.0" width="2.1" height="1" /><rect x="66.0" y="70.0" width="2.1" height="1" /><rect x="75.0" y="71.0" width="2.1" height="1" /><rect x="78.0" y="71.0" width="2.1" height="1" /><rect x="-0.9" y="73.0" width="2.1" height="1" /><rect x="2.2" y="73.0" width="2.1" height="1" /><rect x="11.1" y="74.0" width="2.1" height="1" /><rect x="14.2" y="74.0" width="2.1" height="1" /><rect x="23.1" y="75.0" width="2.1" height="1" /><rect x="26.2" y="75.0" width="2.1" height="1" /><rect x="35.1" y="76.0" width="2.1" height="1" /><rect x="38.2" y="76.0" width="2.1" height="1" /><rect x="47.1" y="77.0" width="2.1" height="1" /><rect x="50.2" y="77.0" width="2.1" height="1" /><rect x="59.1" y="78.0" width="2.1" height="1" /><rect x="62.2" y="78.0" width="2.1" height="1" /><rect x="71.1" y="79.0" width="2.1" height="1" /><rect x="74.2" y="79.0" width="2.1" height="1" /><rect x="83.1" y="80.0" width="2.1" height="1" /><rect x="86.2" y="80.0" width="2.1" height="1" /><rect x="7.2" y="82.0" width="2.1" height="1" /><rect x="10.3" y="82.0" width="2.1" height="1" /><rect x="19.2" y="83.0" width="2.1" height="1" /><rect x="22.4" y="83.0" width="2.1" height="1" /><rect x="31.2" y="84.0" width="2.1" height="1" /><rect x="34.4" y="84.0" width="2.1" height="1" /><rect x="43.2" y="85.0" width="2.1" height="1" /><rect x="46.4" y="85.0" width="2.1" height="1" /><rect x="55.2" y="86.0" width="2.1" height="1" /><rect x="58.4" y="86.0" width="2.1" height="1" /><rect x="67.2" y="87.0" width="2.1" height="1" /><rect x="70.3" y="87.0" width="2.1" height="1" /><rect x="79.2" y="88.0" width="2.1" height="1" /><rect x="82.3" y="88.0" width="2.1" height="1" /><rect x="3.4" y="90.0" width="2.1" height="1" /><rect x="6.5" y="90.0" width="2.1" height="1" /><rect x="15.4" y="91.0" width="2.1" height="1" /><rect x="18.5" y="91.0" width="2.1" height="1" /><rect x="27.4" y="92.0" width="2.1" height="1" /><rect x="30.5" y="92.0" width="2.1" height="1" /><rect x="39.4" y="93.0" width="2.1" height="1" /><rect x="42.5" y="93.0" width="2.1" height="1" /><rect x="51.4" y="94.0" width="2.1" height="1" /><rect x="54.5" y="94.0" width="2.1" height="1" /><rect x="63.4" y="95.0" width="2.1" height="1" /><rect x="66.5" y="95.0" width="2.1" height="1" /><rect x="75.4" y="96.0" width="2.1" height="1" /><rect x="78.5" y="96.0" width="2.1" height="1" /><rect x="-0.5" y="98.0" width="2.1" height="1" /><rect x="2.6" y="98.0" width="2.1" height="1" /><rect x="11.5" y="99.0" width="2.1" height="1" /><rect x="14.6" y="99.0" width="2.1" height="1" /><rect x="23.5" y="100.0" width="2.1" height="1" /><rect x="26.6" y="100.0" width="2.1" height="1" /><rect x="35.5" y="101.0" width="2.1" height="1" /><rect x="38.6" y="101.0" width="2.1" height="1" /><rect x="47.5" y="102.0" width="2.1" height="1" /><rect x="50.6" y="102.0" width="2.1" height="1" /><rect x="59.5" y="103.0" width="2.1" height="1" /><rect x="62.6" y="103.0" width="2.1" height="1" /><rect x="71.5" y="104.0" width="2.1" height="1" /><rect x="74.6" y="104.0" width="2.1" height="1" /></g><polygon points="6.6,26.12 88,32.00 88,34.00 6.6,27.12" fill="#86bd5e"/><polygon points="0,32.90 88,40.20 88,43.00 0,34.90" fill="#72a847"/><polygon points="0,41.75 88,48.95 88,52.45 0,44.25" fill="#72a847"/><polygon points="0,50.40 88,57.50 88,59.70 0,52.40" fill="#72a847"/><polygon points="0,52.60 88,59.70 88,61.90 0,54.60" fill="#72a847"/><polygon points="0,60.00 88,66.60 88,70.40 0,63.80" fill="#72a847"/><polygon points="0,68.75 88,76.00 88,78.20 0,71.85" fill="#72a847"/><polygon points="0,77.45 88,85.00 88,86.20 0,79.15" fill="#7cb552"/><rect x="3.0" y="46.5" width="6" height="1" fill="#8cc268"/><rect x="14.0" y="47.5" width="6" height="1" fill="#8cc268"/><rect x="25.0" y="48.5" width="6" height="1" fill="#8cc268"/><rect x="36.0" y="49.5" width="6" height="1" fill="#8cc268"/><rect x="47.0" y="50.5" width="6" height="1" fill="#8cc268"/><rect x="58.0" y="51.5" width="6" height="1" fill="#8cc268"/><rect x="6.0" y="87.5" width="5" height="1" fill="#8cc268"/><rect x="18.0" y="88.5" width="5" height="1" fill="#8cc268"/></g>
<g transform="translate(1416,591)" shape-rendering="crispEdges"><rect x="0" y="0.2" width="25" height="2.8" fill="#6a9a3d"/><rect x="25" y="-0.2" width="63" height="2.6" fill="#6a9a3d"/><g fill="#6a9a3d"><rect x="57.8" y="3.0" width="2.1" height="1" /><rect x="60.9" y="3.0" width="2.1" height="1" /><rect x="69.8" y="4.0" width="2.1" height="1" /><rect x="72.8" y="4.0" width="2.1" height="1" /><rect x="81.8" y="5.0" width="2.1" height="1" /><rect x="84.8" y="5.0" width="2.1" height="1" /><rect x="5.9" y="7.0" width="2.1" height="1" /><rect x="9.0" y="7.0" width="2.1" height="1" /><rect x="17.9" y="8.1" width="2.1" height="1" /><rect x="21.0" y="8.1" width="2.1" height="1" /><rect x="29.9" y="9.1" width="2.1" height="1" /><rect x="33.0" y="9.1" width="2.1" height="1" /><rect x="41.9" y="10.1" width="2.1" height="1" /><rect x="45.0" y="10.1" width="2.1" height="1" /><rect x="53.9" y="11.1" width="2.1" height="1" /><rect x="57.0" y="11.1" width="2.1" height="1" /><rect x="65.9" y="12.1" width="2.1" height="1" /><rect x="69.0" y="12.1" width="2.1" height="1" /><rect x="77.9" y="13.1" width="2.1" height="1" /><rect x="81.0" y="13.1" width="2.1" height="1" /><rect x="2.1" y="15.1" width="2.1" height="1" /><rect x="5.2" y="15.1" width="2.1" height="1" /><rect x="14.1" y="16.1" width="2.1" height="1" /><rect x="17.2" y="16.1" width="2.1" height="1" /><rect x="26.1" y="17.1" width="2.1" height="1" /><rect x="29.2" y="17.1" width="2.1" height="1" /><rect x="38.0" y="18.1" width="2.1" height="1" /><rect x="41.1" y="18.1" width="2.1" height="1" /><rect x="50.0" y="19.1" width="2.1" height="1" /><rect x="53.1" y="19.1" width="2.1" height="1" /><rect x="62.0" y="20.1" width="2.1" height="1" /><rect x="65.1" y="20.1" width="2.1" height="1" /><rect x="74.0" y="21.1" width="2.1" height="1" /><rect x="77.1" y="21.1" width="2.1" height="1" /><rect x="10.2" y="24.1" width="2.1" height="1" /><rect x="13.3" y="24.1" width="2.1" height="1" /><rect x="22.2" y="25.1" width="2.1" height="1" /><rect x="25.3" y="25.1" width="2.1" height="1" /><rect x="34.2" y="26.1" width="2.1" height="1" /><rect x="37.3" y="26.1" width="2.1" height="1" /><rect x="46.2" y="27.1" width="2.1" height="1" /><rect x="49.3" y="27.1" width="2.1" height="1" /><rect x="58.2" y="28.1" width="2.1" height="1" /><rect x="61.3" y="28.1" width="2.1" height="1" /><rect x="70.2" y="29.1" width="2.1" height="1" /><rect x="73.3" y="29.1" width="2.1" height="1" /><rect x="82.2" y="30.1" width="2.1" height="1" /><rect x="85.3" y="30.1" width="2.1" height="1" /><rect x="6.3" y="32.0" width="2.1" height="1" /><rect x="9.4" y="32.0" width="2.1" height="1" /><rect x="18.4" y="33.0" width="2.1" height="1" /><rect x="21.5" y="33.0" width="2.1" height="1" /><rect x="30.4" y="34.0" width="2.1" height="1" /><rect x="33.5" y="34.0" width="2.1" height="1" /><rect x="42.4" y="35.0" width="2.1" height="1" /><rect x="45.5" y="35.0" width="2.1" height="1" /><rect x="54.4" y="36.0" width="2.1" height="1" /><rect x="57.5" y="36.0" width="2.1" height="1" /><rect x="66.3" y="37.0" width="2.1" height="1" /><rect x="69.4" y="37.0" width="2.1" height="1" /><rect x="78.3" y="38.0" width="2.1" height="1" /><rect x="81.4" y="38.0" width="2.1" height="1" /><rect x="2.5" y="40.0" width="2.1" height="1" /><rect x="5.6" y="40.0" width="2.1" height="1" /><rect x="14.5" y="41.0" width="2.1" height="1" /><rect x="17.6" y="41.0" width="2.1" height="1" /><rect x="26.5" y="42.0" width="2.1" height="1" /><rect x="29.6" y="42.0" width="2.1" height="1" /><rect x="38.5" y="43.0" width="2.1" height="1" /><rect x="41.6" y="43.0" width="2.1" height="1" /><rect x="50.5" y="44.0" width="2.1" height="1" /><rect x="53.6" y="44.0" width="2.1" height="1" /><rect x="62.5" y="45.0" width="2.1" height="1" /><rect x="65.6" y="45.0" width="2.1" height="1" /><rect x="74.5" y="46.0" width="2.1" height="1" /><rect x="77.6" y="46.0" width="2.1" height="1" /><rect x="10.7" y="49.0" width="2.1" height="1" /><rect x="13.8" y="49.0" width="2.1" height="1" /><rect x="22.6" y="50.0" width="2.1" height="1" /><rect x="25.8" y="50.0" width="2.1" height="1" /><rect x="34.6" y="51.0" width="2.1" height="1" /><rect x="37.8" y="51.0" width="2.1" height="1" /><rect x="46.6" y="52.0" width="2.1" height="1" /><rect x="49.8" y="52.0" width="2.1" height="1" /><rect x="58.6" y="53.0" width="2.1" height="1" /><rect x="61.8" y="53.0" width="2.1" height="1" /><rect x="70.7" y="54.0" width="2.1" height="1" /><rect x="73.8" y="54.0" width="2.1" height="1" /><rect x="82.7" y="55.0" width="2.1" height="1" /><rect x="85.8" y="55.0" width="2.1" height="1" /><rect x="6.8" y="57.0" width="2.1" height="1" /><rect x="9.9" y="57.0" width="2.1" height="1" /><rect x="18.8" y="58.0" width="2.1" height="1" /><rect x="21.9" y="58.0" width="2.1" height="1" /><rect x="30.8" y="59.0" width="2.1" height="1" /><rect x="33.9" y="59.0" width="2.1" height="1" /><rect x="42.8" y="60.0" width="2.1" height="1" /><rect x="45.9" y="60.0" width="2.1" height="1" /><rect x="54.8" y="61.0" width="2.1" height="1" /><rect x="57.9" y="61.0" width="2.1" height="1" /><rect x="66.8" y="62.0" width="2.1" height="1" /><rect x="69.9" y="62.0" width="2.1" height="1" /><rect x="78.8" y="63.0" width="2.1" height="1" /><rect x="81.9" y="63.0" width="2.1" height="1" /><rect x="3.0" y="65.0" width="2.1" height="1" /><rect x="6.1" y="65.0" width="2.1" height="1" /><rect x="15.0" y="66.0" width="2.1" height="1" /><rect x="18.1" y="66.0" width="2.1" height="1" /><rect x="27.0" y="67.0" width="2.1" height="1" /><rect x="30.1" y="67.0" width="2.1" height="1" /><rect x="39.0" y="68.0" width="2.1" height="1" /><rect x="42.1" y="68.0" width="2.1" height="1" /><rect x="51.0" y="69.0" width="2.1" height="1" /><rect x="54.1" y="69.0" width="2.1" height="1" /><rect x="63.0" y="70.0" width="2.1" height="1" /><rect x="66.0" y="70.0" width="2.1" height="1" /><rect x="75.0" y="71.0" width="2.1" height="1" /><rect x="78.0" y="71.0" width="2.1" height="1" /><rect x="-0.9" y="73.0" width="2.1" height="1" /><rect x="2.2" y="73.0" width="2.1" height="1" /><rect x="11.1" y="74.0" width="2.1" height="1" /><rect x="14.2" y="74.0" width="2.1" height="1" /><rect x="23.1" y="75.0" width="2.1" height="1" /><rect x="26.2" y="75.0" width="2.1" height="1" /><rect x="35.1" y="76.0" width="2.1" height="1" /><rect x="38.2" y="76.0" width="2.1" height="1" /><rect x="47.1" y="77.0" width="2.1" height="1" /><rect x="50.2" y="77.0" width="2.1" height="1" /><rect x="59.1" y="78.0" width="2.1" height="1" /><rect x="62.2" y="78.0" width="2.1" height="1" /><rect x="71.1" y="79.0" width="2.1" height="1" /><rect x="74.2" y="79.0" width="2.1" height="1" /><rect x="83.1" y="80.0" width="2.1" height="1" /><rect x="86.2" y="80.0" width="2.1" height="1" /><rect x="7.2" y="82.0" width="2.1" height="1" /><rect x="10.3" y="82.0" width="2.1" height="1" /><rect x="19.2" y="83.0" width="2.1" height="1" /><rect x="22.4" y="83.0" width="2.1" height="1" /><rect x="31.2" y="84.0" width="2.1" height="1" /><rect x="34.4" y="84.0" width="2.1" height="1" /><rect x="43.2" y="85.0" width="2.1" height="1" /><rect x="46.4" y="85.0" width="2.1" height="1" /><rect x="55.2" y="86.0" width="2.1" height="1" /><rect x="58.4" y="86.0" width="2.1" height="1" /><rect x="67.2" y="87.0" width="2.1" height="1" /><rect x="70.3" y="87.0" width="2.1" height="1" /><rect x="79.2" y="88.0" width="2.1" height="1" /><rect x="82.3" y="88.0" width="2.1" height="1" /><rect x="3.4" y="90.0" width="2.1" height="1" /><rect x="6.5" y="90.0" width="2.1" height="1" /><rect x="15.4" y="91.0" width="2.1" height="1" /><rect x="18.5" y="91.0" width="2.1" height="1" /><rect x="27.4" y="92.0" width="2.1" height="1" /><rect x="30.5" y="92.0" width="2.1" height="1" /><rect x="39.4" y="93.0" width="2.1" height="1" /><rect x="42.5" y="93.0" width="2.1" height="1" /><rect x="51.4" y="94.0" width="2.1" height="1" /><rect x="54.5" y="94.0" width="2.1" height="1" /><rect x="63.4" y="95.0" width="2.1" height="1" /><rect x="66.5" y="95.0" width="2.1" height="1" /><rect x="75.4" y="96.0" width="2.1" height="1" /><rect x="78.5" y="96.0" width="2.1" height="1" /><rect x="-0.5" y="98.0" width="2.1" height="1" /><rect x="2.6" y="98.0" width="2.1" height="1" /><rect x="11.5" y="99.0" width="2.1" height="1" /><rect x="14.6" y="99.0" width="2.1" height="1" /><rect x="23.5" y="100.0" width="2.1" height="1" /><rect x="26.6" y="100.0" width="2.1" height="1" /><rect x="35.5" y="101.0" width="2.1" height="1" /><rect x="38.6" y="101.0" width="2.1" height="1" /><rect x="47.5" y="102.0" width="2.1" height="1" /><rect x="50.6" y="102.0" width="2.1" height="1" /><rect x="59.5" y="103.0" width="2.1" height="1" /><rect x="62.6" y="103.0" width="2.1" height="1" /><rect x="71.5" y="104.0" width="2.1" height="1" /><rect x="74.6" y="104.0" width="2.1" height="1" /></g><polygon points="6.6,26.12 88,32.00 88,34.00 6.6,27.12" fill="#86bd5e"/><polygon points="0,32.90 88,40.20 88,43.00 0,34.90" fill="#72a847"/><polygon points="0,41.75 88,48.95 88,52.45 0,44.25" fill="#72a847"/><polygon points="0,50.40 88,57.50 88,59.70 0,52.40" fill="#72a847"/><polygon points="0,52.60 88,59.70 88,61.90 0,54.60" fill="#72a847"/><polygon points="0,60.00 88,66.60 88,70.40 0,63.80" fill="#72a847"/><polygon points="0,68.75 88,76.00 88,78.20 0,71.85" fill="#72a847"/><polygon points="0,77.45 88,85.00 88,86.20 0,79.15" fill="#7cb552"/><rect x="3.0" y="46.5" width="6" height="1" fill="#8cc268"/><rect x="14.0" y="47.5" width="6" height="1" fill="#8cc268"/><rect x="25.0" y="48.5" width="6" height="1" fill="#8cc268"/><rect x="36.0" y="49.5" width="6" height="1" fill="#8cc268"/><rect x="47.0" y="50.5" width="6" height="1" fill="#8cc268"/><rect x="58.0" y="51.5" width="6" height="1" fill="#8cc268"/><rect x="6.0" y="87.5" width="5" height="1" fill="#8cc268"/><rect x="18.0" y="88.5" width="5" height="1" fill="#8cc268"/></g>
<text x="299.0" y="670.4" font-size="35.76" fill="#8a8a8a" textLength="91.6" lengthAdjust="spacingAndGlyphs">Tax ID</text>
<text x="910.6" y="623.9" font-size="23.55" fill="#8a8a8a" textLength="95.5" lengthAdjust="spacingAndGlyphs">Birthdate</text>
<text x="911.0" y="656.0" font-size="35.76" fill="#0a0a0a" textLength="45.0" lengthAdjust="spacingAndGlyphs">16-</text>
<text x="956.0" y="656.0" font-size="35.76" fill="#0a0a0a" textLength="136.0" lengthAdjust="spacingAndGlyphs">11-2023</text>
<text x="956.0" y="656.0" font-size="35.76" fill="#0a0a0a" textLength="136.0" lengthAdjust="spacingAndGlyphs">nov-2023</text>
<g stroke="#8a8a8a" stroke-width="4.1"><line x1="1366.7" y1="646.7" x2="1391.3" y2="671.3"/><line x1="1366.7" y1="671.3" x2="1391.3" y2="646.7"/></g>
<text x="1519.6" y="623.9" font-size="23.55" fill="#8a8a8a" textLength="104.4" lengthAdjust="spacingAndGlyphs">Language</text>
<text x="1519.6" y="671.6" font-size="35.76" fill="#0a0a0a" textLength="161.4" lengthAdjust="spacingAndGlyphs">Farsi (Iran)</text>
<polyline points="1973,650.7 1988.8,666.1 2004.6,650.7" fill="none" stroke="#000" stroke-width="2.45" stroke-linecap="round"/>
<rect x="283" y="921" width="524" height="2" fill="#8a8a8a"/>
<rect x="894" y="921" width="523" height="2" fill="#8a8a8a"/>
<rect x="1504" y="921" width="523" height="2" fill="#8a8a8a"/>
<g transform="translate(220.2,867.2) scale(1.61)"><path d="M6.62 10.79c1.44 2.83 3.76 5.14 6.59 6.59l2.2-2.2c.27-.27.67-.36 1.02-.24 1.12.37 2.33.57 3.57.57.55 0 1 .45 1 1V20c0 .55-.45 1-1 1-9.39 0-17-7.61-17-17 0-.55.45-1 1-1h3.5c.55 0 1 .45 1 1 0 1.25.2 2.45.57 3.57.11.35.03.74-.25 1.02l-2.2 2.2z" fill="#8a8a8a"/></g>
<text x="299.5" y="849.0" font-size="23.55" fill="#8a8a8a" textLength="66.0" lengthAdjust="spacingAndGlyphs">Phone</text>
<text x="299.8" y="896.0" font-size="35.76" fill="#0a0a0a" textLength="168.6" lengthAdjust="spacingAndGlyphs">678876778</text>
<g stroke="#8a8a8a" stroke-width="4.1"><line x1="756.9000000000001" y1="871.7" x2="781.5" y2="896.3"/><line x1="756.9000000000001" y1="896.3" x2="781.5" y2="871.7"/></g>
<text x="909.5" y="896.0" font-size="35.76" fill="#8a8a8a" textLength="264.0" lengthAdjust="spacingAndGlyphs">Alternative Phone</text>
<rect x="1444.2" y="873.3" width="31.8" height="25.5" rx="3.5" fill="#8a8a8a"/>
<polyline points="1447.5,878.5 1460,886.5 1472.5,878.5" fill="none" stroke="#fff" stroke-width="3"/>
<text x="1519.7" y="849.0" font-size="23.55" fill="#8a8a8a" textLength="58.7" lengthAdjust="spacingAndGlyphs">Email</text>
<text x="1519.7" y="896.0" font-size="35.76" fill="#0a0a0a" textLength="379.8" lengthAdjust="spacingAndGlyphs">Carlosbrown@gmail.com</text>
<g stroke="#8a8a8a" stroke-width="4.1"><line x1="1976.9" y1="871.7" x2="2001.5" y2="896.3"/><line x1="1976.9" y1="896.3" x2="2001.5" y2="871.7"/></g>
<rect x="300" y="968" width="96" height="96" fill="#fff" stroke="#808080" stroke-width="2"/>
<polygon points="312.1,1020.5 324.8,1007.9 338.3,1020.5 371.1,987.3 383.8,999.9 338.3,1046.7" fill="#e6e6e6"/>
<text x="437.0" y="1023.9" font-size="35.76" fill="#0a0a0a" textLength="267.7" lengthAdjust="spacingAndGlyphs">Commercial Auth.</text>
<rect x="283" y="1297" width="524" height="2" fill="#8a8a8a"/>
<rect x="894" y="1297" width="524" height="2" fill="#8a8a8a"/>
<g transform="translate(196,1193)" shape-rendering="crispEdges"><rect x="0" y="0.2" width="25" height="2.8" fill="#6a9a3d"/><rect x="25" y="-0.2" width="63" height="2.6" fill="#6a9a3d"/><g fill="#6a9a3d"><rect x="57.8" y="3.0" width="2.1" height="1" /><rect x="60.9" y="3.0" width="2.1" height="1" /><rect x="69.8" y="4.0" width="2.1" height="1" /><rect x="72.8" y="4.0" width="2.1" height="1" /><rect x="81.8" y="5.0" width="2.1" height="1" /><rect x="84.8" y="5.0" width="2.1" height="1" /><rect x="5.9" y="7.0" width="2.1" height="1" /><rect x="9.0" y="7.0" width="2.1" height="1" /><rect x="17.9" y="8.1" width="2.1" height="1" /><rect x="21.0" y="8.1" width="2.1" height="1" /><rect x="29.9" y="9.1" width="2.1" height="1" /><rect x="33.0" y="9.1" width="2.1" height="1" /><rect x="41.9" y="10.1" width="2.1" height="1" /><rect x="45.0" y="10.1" width="2.1" height="1" /><rect x="53.9" y="11.1" width="2.1" height="1" /><rect x="57.0" y="11.1" width="2.1" height="1" /><rect x="65.9" y="12.1" width="2.1" height="1" /><rect x="69.0" y="12.1" width="2.1" height="1" /><rect x="77.9" y="13.1" width="2.1" height="1" /><rect x="81.0" y="13.1" width="2.1" height="1" /><rect x="2.1" y="15.1" width="2.1" height="1" /><rect x="5.2" y="15.1" width="2.1" height="1" /><rect x="14.1" y="16.1" width="2.1" height="1" /><rect x="17.2" y="16.1" width="2.1" height="1" /><rect x="26.1" y="17.1" width="2.1" height="1" /><rect x="29.2" y="17.1" width="2.1" height="1" /><rect x="38.0" y="18.1" width="2.1" height="1" /><rect x="41.1" y="18.1" width="2.1" height="1" /><rect x="50.0" y="19.1" width="2.1" height="1" /><rect x="53.1" y="19.1" width="2.1" height="1" /><rect x="62.0" y="20.1" width="2.1" height="1" /><rect x="65.1" y="20.1" width="2.1" height="1" /><rect x="74.0" y="21.1" width="2.1" height="1" /><rect x="77.1" y="21.1" width="2.1" height="1" /><rect x="10.2" y="24.1" width="2.1" height="1" /><rect x="13.3" y="24.1" width="2.1" height="1" /><rect x="22.2" y="25.1" width="2.1" height="1" /><rect x="25.3" y="25.1" width="2.1" height="1" /><rect x="34.2" y="26.1" width="2.1" height="1" /><rect x="37.3" y="26.1" width="2.1" height="1" /><rect x="46.2" y="27.1" width="2.1" height="1" /><rect x="49.3" y="27.1" width="2.1" height="1" /><rect x="58.2" y="28.1" width="2.1" height="1" /><rect x="61.3" y="28.1" width="2.1" height="1" /><rect x="70.2" y="29.1" width="2.1" height="1" /><rect x="73.3" y="29.1" width="2.1" height="1" /><rect x="82.2" y="30.1" width="2.1" height="1" /><rect x="85.3" y="30.1" width="2.1" height="1" /><rect x="6.3" y="32.0" width="2.1" height="1" /><rect x="9.4" y="32.0" width="2.1" height="1" /><rect x="18.4" y="33.0" width="2.1" height="1" /><rect x="21.5" y="33.0" width="2.1" height="1" /><rect x="30.4" y="34.0" width="2.1" height="1" /><rect x="33.5" y="34.0" width="2.1" height="1" /><rect x="42.4" y="35.0" width="2.1" height="1" /><rect x="45.5" y="35.0" width="2.1" height="1" /><rect x="54.4" y="36.0" width="2.1" height="1" /><rect x="57.5" y="36.0" width="2.1" height="1" /><rect x="66.3" y="37.0" width="2.1" height="1" /><rect x="69.4" y="37.0" width="2.1" height="1" /><rect x="78.3" y="38.0" width="2.1" height="1" /><rect x="81.4" y="38.0" width="2.1" height="1" /><rect x="2.5" y="40.0" width="2.1" height="1" /><rect x="5.6" y="40.0" width="2.1" height="1" /><rect x="14.5" y="41.0" width="2.1" height="1" /><rect x="17.6" y="41.0" width="2.1" height="1" /><rect x="26.5" y="42.0" width="2.1" height="1" /><rect x="29.6" y="42.0" width="2.1" height="1" /><rect x="38.5" y="43.0" width="2.1" height="1" /><rect x="41.6" y="43.0" width="2.1" height="1" /><rect x="50.5" y="44.0" width="2.1" height="1" /><rect x="53.6" y="44.0" width="2.1" height="1" /><rect x="62.5" y="45.0" width="2.1" height="1" /><rect x="65.6" y="45.0" width="2.1" height="1" /><rect x="74.5" y="46.0" width="2.1" height="1" /><rect x="77.6" y="46.0" width="2.1" height="1" /><rect x="10.7" y="49.0" width="2.1" height="1" /><rect x="13.8" y="49.0" width="2.1" height="1" /><rect x="22.6" y="50.0" width="2.1" height="1" /><rect x="25.8" y="50.0" width="2.1" height="1" /><rect x="34.6" y="51.0" width="2.1" height="1" /><rect x="37.8" y="51.0" width="2.1" height="1" /><rect x="46.6" y="52.0" width="2.1" height="1" /><rect x="49.8" y="52.0" width="2.1" height="1" /><rect x="58.6" y="53.0" width="2.1" height="1" /><rect x="61.8" y="53.0" width="2.1" height="1" /><rect x="70.7" y="54.0" width="2.1" height="1" /><rect x="73.8" y="54.0" width="2.1" height="1" /><rect x="82.7" y="55.0" width="2.1" height="1" /><rect x="85.8" y="55.0" width="2.1" height="1" /><rect x="6.8" y="57.0" width="2.1" height="1" /><rect x="9.9" y="57.0" width="2.1" height="1" /><rect x="18.8" y="58.0" width="2.1" height="1" /><rect x="21.9" y="58.0" width="2.1" height="1" /><rect x="30.8" y="59.0" width="2.1" height="1" /><rect x="33.9" y="59.0" width="2.1" height="1" /><rect x="42.8" y="60.0" width="2.1" height="1" /><rect x="45.9" y="60.0" width="2.1" height="1" /><rect x="54.8" y="61.0" width="2.1" height="1" /><rect x="57.9" y="61.0" width="2.1" height="1" /><rect x="66.8" y="62.0" width="2.1" height="1" /><rect x="69.9" y="62.0" width="2.1" height="1" /><rect x="78.8" y="63.0" width="2.1" height="1" /><rect x="81.9" y="63.0" width="2.1" height="1" /><rect x="3.0" y="65.0" width="2.1" height="1" /><rect x="6.1" y="65.0" width="2.1" height="1" /><rect x="15.0" y="66.0" width="2.1" height="1" /><rect x="18.1" y="66.0" width="2.1" height="1" /><rect x="27.0" y="67.0" width="2.1" height="1" /><rect x="30.1" y="67.0" width="2.1" height="1" /><rect x="39.0" y="68.0" width="2.1" height="1" /><rect x="42.1" y="68.0" width="2.1" height="1" /><rect x="51.0" y="69.0" width="2.1" height="1" /><rect x="54.1" y="69.0" width="2.1" height="1" /><rect x="63.0" y="70.0" width="2.1" height="1" /><rect x="66.0" y="70.0" width="2.1" height="1" /><rect x="75.0" y="71.0" width="2.1" height="1" /><rect x="78.0" y="71.0" width="2.1" height="1" /><rect x="-0.9" y="73.0" width="2.1" height="1" /><rect x="2.2" y="73.0" width="2.1" height="1" /><rect x="11.1" y="74.0" width="2.1" height="1" /><rect x="14.2" y="74.0" width="2.1" height="1" /><rect x="23.1" y="75.0" width="2.1" height="1" /><rect x="26.2" y="75.0" width="2.1" height="1" /><rect x="35.1" y="76.0" width="2.1" height="1" /><rect x="38.2" y="76.0" width="2.1" height="1" /><rect x="47.1" y="77.0" width="2.1" height="1" /><rect x="50.2" y="77.0" width="2.1" height="1" /><rect x="59.1" y="78.0" width="2.1" height="1" /><rect x="62.2" y="78.0" width="2.1" height="1" /><rect x="71.1" y="79.0" width="2.1" height="1" /><rect x="74.2" y="79.0" width="2.1" height="1" /><rect x="83.1" y="80.0" width="2.1" height="1" /><rect x="86.2" y="80.0" width="2.1" height="1" /><rect x="7.2" y="82.0" width="2.1" height="1" /><rect x="10.3" y="82.0" width="2.1" height="1" /><rect x="19.2" y="83.0" width="2.1" height="1" /><rect x="22.4" y="83.0" width="2.1" height="1" /><rect x="31.2" y="84.0" width="2.1" height="1" /><rect x="34.4" y="84.0" width="2.1" height="1" /><rect x="43.2" y="85.0" width="2.1" height="1" /><rect x="46.4" y="85.0" width="2.1" height="1" /><rect x="55.2" y="86.0" width="2.1" height="1" /><rect x="58.4" y="86.0" width="2.1" height="1" /><rect x="67.2" y="87.0" width="2.1" height="1" /><rect x="70.3" y="87.0" width="2.1" height="1" /><rect x="79.2" y="88.0" width="2.1" height="1" /><rect x="82.3" y="88.0" width="2.1" height="1" /><rect x="3.4" y="90.0" width="2.1" height="1" /><rect x="6.5" y="90.0" width="2.1" height="1" /><rect x="15.4" y="91.0" width="2.1" height="1" /><rect x="18.5" y="91.0" width="2.1" height="1" /><rect x="27.4" y="92.0" width="2.1" height="1" /><rect x="30.5" y="92.0" width="2.1" height="1" /><rect x="39.4" y="93.0" width="2.1" height="1" /><rect x="42.5" y="93.0" width="2.1" height="1" /><rect x="51.4" y="94.0" width="2.1" height="1" /><rect x="54.5" y="94.0" width="2.1" height="1" /><rect x="63.4" y="95.0" width="2.1" height="1" /><rect x="66.5" y="95.0" width="2.1" height="1" /><rect x="75.4" y="96.0" width="2.1" height="1" /><rect x="78.5" y="96.0" width="2.1" height="1" /><rect x="-0.5" y="98.0" width="2.1" height="1" /><rect x="2.6" y="98.0" width="2.1" height="1" /><rect x="11.5" y="99.0" width="2.1" height="1" /><rect x="14.6" y="99.0" width="2.1" height="1" /><rect x="23.5" y="100.0" width="2.1" height="1" /><rect x="26.6" y="100.0" width="2.1" height="1" /><rect x="35.5" y="101.0" width="2.1" height="1" /><rect x="38.6" y="101.0" width="2.1" height="1" /><rect x="47.5" y="102.0" width="2.1" height="1" /><rect x="50.6" y="102.0" width="2.1" height="1" /><rect x="59.5" y="103.0" width="2.1" height="1" /><rect x="62.6" y="103.0" width="2.1" height="1" /><rect x="71.5" y="104.0" width="2.1" height="1" /><rect x="74.6" y="104.0" width="2.1" height="1" /></g><polygon points="6.6,26.12 88,32.00 88,34.00 6.6,27.12" fill="#86bd5e"/><polygon points="0,32.90 88,40.20 88,43.00 0,34.90" fill="#72a847"/><polygon points="0,41.75 88,48.95 88,52.45 0,44.25" fill="#72a847"/><polygon points="0,50.40 88,57.50 88,59.70 0,52.40" fill="#72a847"/><polygon points="0,52.60 88,59.70 88,61.90 0,54.60" fill="#72a847"/><polygon points="0,60.00 88,66.60 88,70.40 0,63.80" fill="#72a847"/><polygon points="0,68.75 88,76.00 88,78.20 0,71.85" fill="#72a847"/><polygon points="0,77.45 88,85.00 88,86.20 0,79.15" fill="#7cb552"/><rect x="3.0" y="46.5" width="6" height="1" fill="#8cc268"/><rect x="14.0" y="47.5" width="6" height="1" fill="#8cc268"/><rect x="25.0" y="48.5" width="6" height="1" fill="#8cc268"/><rect x="36.0" y="49.5" width="6" height="1" fill="#8cc268"/><rect x="47.0" y="50.5" width="6" height="1" fill="#8cc268"/><rect x="58.0" y="51.5" width="6" height="1" fill="#8cc268"/><rect x="6.0" y="87.5" width="5" height="1" fill="#8cc268"/><rect x="18.0" y="88.5" width="5" height="1" fill="#8cc268"/></g>
<g transform="translate(806,1193)" shape-rendering="crispEdges"><rect x="0" y="0.2" width="25" height="2.8" fill="#6a9a3d"/><rect x="25" y="-0.2" width="63" height="2.6" fill="#6a9a3d"/><g fill="#6a9a3d"><rect x="57.8" y="3.0" width="2.1" height="1" /><rect x="60.9" y="3.0" width="2.1" height="1" /><rect x="69.8" y="4.0" width="2.1" height="1" /><rect x="72.8" y="4.0" width="2.1" height="1" /><rect x="81.8" y="5.0" width="2.1" height="1" /><rect x="84.8" y="5.0" width="2.1" height="1" /><rect x="5.9" y="7.0" width="2.1" height="1" /><rect x="9.0" y="7.0" width="2.1" height="1" /><rect x="17.9" y="8.1" width="2.1" height="1" /><rect x="21.0" y="8.1" width="2.1" height="1" /><rect x="29.9" y="9.1" width="2.1" height="1" /><rect x="33.0" y="9.1" width="2.1" height="1" /><rect x="41.9" y="10.1" width="2.1" height="1" /><rect x="45.0" y="10.1" width="2.1" height="1" /><rect x="53.9" y="11.1" width="2.1" height="1" /><rect x="57.0" y="11.1" width="2.1" height="1" /><rect x="65.9" y="12.1" width="2.1" height="1" /><rect x="69.0" y="12.1" width="2.1" height="1" /><rect x="77.9" y="13.1" width="2.1" height="1" /><rect x="81.0" y="13.1" width="2.1" height="1" /><rect x="2.1" y="15.1" width="2.1" height="1" /><rect x="5.2" y="15.1" width="2.1" height="1" /><rect x="14.1" y="16.1" width="2.1" height="1" /><rect x="17.2" y="16.1" width="2.1" height="1" /><rect x="26.1" y="17.1" width="2.1" height="1" /><rect x="29.2" y="17.1" width="2.1" height="1" /><rect x="38.0" y="18.1" width="2.1" height="1" /><rect x="41.1" y="18.1" width="2.1" height="1" /><rect x="50.0" y="19.1" width="2.1" height="1" /><rect x="53.1" y="19.1" width="2.1" height="1" /><rect x="62.0" y="20.1" width="2.1" height="1" /><rect x="65.1" y="20.1" width="2.1" height="1" /><rect x="74.0" y="21.1" width="2.1" height="1" /><rect x="77.1" y="21.1" width="2.1" height="1" /><rect x="10.2" y="24.1" width="2.1" height="1" /><rect x="13.3" y="24.1" width="2.1" height="1" /><rect x="22.2" y="25.1" width="2.1" height="1" /><rect x="25.3" y="25.1" width="2.1" height="1" /><rect x="34.2" y="26.1" width="2.1" height="1" /><rect x="37.3" y="26.1" width="2.1" height="1" /><rect x="46.2" y="27.1" width="2.1" height="1" /><rect x="49.3" y="27.1" width="2.1" height="1" /><rect x="58.2" y="28.1" width="2.1" height="1" /><rect x="61.3" y="28.1" width="2.1" height="1" /><rect x="70.2" y="29.1" width="2.1" height="1" /><rect x="73.3" y="29.1" width="2.1" height="1" /><rect x="82.2" y="30.1" width="2.1" height="1" /><rect x="85.3" y="30.1" width="2.1" height="1" /><rect x="6.3" y="32.0" width="2.1" height="1" /><rect x="9.4" y="32.0" width="2.1" height="1" /><rect x="18.4" y="33.0" width="2.1" height="1" /><rect x="21.5" y="33.0" width="2.1" height="1" /><rect x="30.4" y="34.0" width="2.1" height="1" /><rect x="33.5" y="34.0" width="2.1" height="1" /><rect x="42.4" y="35.0" width="2.1" height="1" /><rect x="45.5" y="35.0" width="2.1" height="1" /><rect x="54.4" y="36.0" width="2.1" height="1" /><rect x="57.5" y="36.0" width="2.1" height="1" /><rect x="66.3" y="37.0" width="2.1" height="1" /><rect x="69.4" y="37.0" width="2.1" height="1" /><rect x="78.3" y="38.0" width="2.1" height="1" /><rect x="81.4" y="38.0" width="2.1" height="1" /><rect x="2.5" y="40.0" width="2.1" height="1" /><rect x="5.6" y="40.0" width="2.1" height="1" /><rect x="14.5" y="41.0" width="2.1" height="1" /><rect x="17.6" y="41.0" width="2.1" height="1" /><rect x="26.5" y="42.0" width="2.1" height="1" /><rect x="29.6" y="42.0" width="2.1" height="1" /><rect x="38.5" y="43.0" width="2.1" height="1" /><rect x="41.6" y="43.0" width="2.1" height="1" /><rect x="50.5" y="44.0" width="2.1" height="1" /><rect x="53.6" y="44.0" width="2.1" height="1" /><rect x="62.5" y="45.0" width="2.1" height="1" /><rect x="65.6" y="45.0" width="2.1" height="1" /><rect x="74.5" y="46.0" width="2.1" height="1" /><rect x="77.6" y="46.0" width="2.1" height="1" /><rect x="10.7" y="49.0" width="2.1" height="1" /><rect x="13.8" y="49.0" width="2.1" height="1" /><rect x="22.6" y="50.0" width="2.1" height="1" /><rect x="25.8" y="50.0" width="2.1" height="1" /><rect x="34.6" y="51.0" width="2.1" height="1" /><rect x="37.8" y="51.0" width="2.1" height="1" /><rect x="46.6" y="52.0" width="2.1" height="1" /><rect x="49.8" y="52.0" width="2.1" height="1" /><rect x="58.6" y="53.0" width="2.1" height="1" /><rect x="61.8" y="53.0" width="2.1" height="1" /><rect x="70.7" y="54.0" width="2.1" height="1" /><rect x="73.8" y="54.0" width="2.1" height="1" /><rect x="82.7" y="55.0" width="2.1" height="1" /><rect x="85.8" y="55.0" width="2.1" height="1" /><rect x="6.8" y="57.0" width="2.1" height="1" /><rect x="9.9" y="57.0" width="2.1" height="1" /><rect x="18.8" y="58.0" width="2.1" height="1" /><rect x="21.9" y="58.0" width="2.1" height="1" /><rect x="30.8" y="59.0" width="2.1" height="1" /><rect x="33.9" y="59.0" width="2.1" height="1" /><rect x="42.8" y="60.0" width="2.1" height="1" /><rect x="45.9" y="60.0" width="2.1" height="1" /><rect x="54.8" y="61.0" width="2.1" height="1" /><rect x="57.9" y="61.0" width="2.1" height="1" /><rect x="66.8" y="62.0" width="2.1" height="1" /><rect x="69.9" y="62.0" width="2.1" height="1" /><rect x="78.8" y="63.0" width="2.1" height="1" /><rect x="81.9" y="63.0" width="2.1" height="1" /><rect x="3.0" y="65.0" width="2.1" height="1" /><rect x="6.1" y="65.0" width="2.1" height="1" /><rect x="15.0" y="66.0" width="2.1" height="1" /><rect x="18.1" y="66.0" width="2.1" height="1" /><rect x="27.0" y="67.0" width="2.1" height="1" /><rect x="30.1" y="67.0" width="2.1" height="1" /><rect x="39.0" y="68.0" width="2.1" height="1" /><rect x="42.1" y="68.0" width="2.1" height="1" /><rect x="51.0" y="69.0" width="2.1" height="1" /><rect x="54.1" y="69.0" width="2.1" height="1" /><rect x="63.0" y="70.0" width="2.1" height="1" /><rect x="66.0" y="70.0" width="2.1" height="1" /><rect x="75.0" y="71.0" width="2.1" height="1" /><rect x="78.0" y="71.0" width="2.1" height="1" /><rect x="-0.9" y="73.0" width="2.1" height="1" /><rect x="2.2" y="73.0" width="2.1" height="1" /><rect x="11.1" y="74.0" width="2.1" height="1" /><rect x="14.2" y="74.0" width="2.1" height="1" /><rect x="23.1" y="75.0" width="2.1" height="1" /><rect x="26.2" y="75.0" width="2.1" height="1" /><rect x="35.1" y="76.0" width="2.1" height="1" /><rect x="38.2" y="76.0" width="2.1" height="1" /><rect x="47.1" y="77.0" width="2.1" height="1" /><rect x="50.2" y="77.0" width="2.1" height="1" /><rect x="59.1" y="78.0" width="2.1" height="1" /><rect x="62.2" y="78.0" width="2.1" height="1" /><rect x="71.1" y="79.0" width="2.1" height="1" /><rect x="74.2" y="79.0" width="2.1" height="1" /><rect x="83.1" y="80.0" width="2.1" height="1" /><rect x="86.2" y="80.0" width="2.1" height="1" /><rect x="7.2" y="82.0" width="2.1" height="1" /><rect x="10.3" y="82.0" width="2.1" height="1" /><rect x="19.2" y="83.0" width="2.1" height="1" /><rect x="22.4" y="83.0" width="2.1" height="1" /><rect x="31.2" y="84.0" width="2.1" height="1" /><rect x="34.4" y="84.0" width="2.1" height="1" /><rect x="43.2" y="85.0" width="2.1" height="1" /><rect x="46.4" y="85.0" width="2.1" height="1" /><rect x="55.2" y="86.0" width="2.1" height="1" /><rect x="58.4" y="86.0" width="2.1" height="1" /><rect x="67.2" y="87.0" width="2.1" height="1" /><rect x="70.3" y="87.0" width="2.1" height="1" /><rect x="79.2" y="88.0" width="2.1" height="1" /><rect x="82.3" y="88.0" width="2.1" height="1" /><rect x="3.4" y="90.0" width="2.1" height="1" /><rect x="6.5" y="90.0" width="2.1" height="1" /><rect x="15.4" y="91.0" width="2.1" height="1" /><rect x="18.5" y="91.0" width="2.1" height="1" /><rect x="27.4" y="92.0" width="2.1" height="1" /><rect x="30.5" y="92.0" width="2.1" height="1" /><rect x="39.4" y="93.0" width="2.1" height="1" /><rect x="42.5" y="93.0" width="2.1" height="1" /><rect x="51.4" y="94.0" width="2.1" height="1" /><rect x="54.5" y="94.0" width="2.1" height="1" /><rect x="63.4" y="95.0" width="2.1" height="1" /><rect x="66.5" y="95.0" width="2.1" height="1" /><rect x="75.4" y="96.0" width="2.1" height="1" /><rect x="78.5" y="96.0" width="2.1" height="1" /><rect x="-0.5" y="98.0" width="2.1" height="1" /><rect x="2.6" y="98.0" width="2.1" height="1" /><rect x="11.5" y="99.0" width="2.1" height="1" /><rect x="14.6" y="99.0" width="2.1" height="1" /><rect x="23.5" y="100.0" width="2.1" height="1" /><rect x="26.6" y="100.0" width="2.1" height="1" /><rect x="35.5" y="101.0" width="2.1" height="1" /><rect x="38.6" y="101.0" width="2.1" height="1" /><rect x="47.5" y="102.0" width="2.1" height="1" /><rect x="50.6" y="102.0" width="2.1" height="1" /><rect x="59.5" y="103.0" width="2.1" height="1" /><rect x="62.6" y="103.0" width="2.1" height="1" /><rect x="71.5" y="104.0" width="2.1" height="1" /><rect x="74.6" y="104.0" width="2.1" height="1" /></g><polygon points="6.6,26.12 88,32.00 88,34.00 6.6,27.12" fill="#86bd5e"/><polygon points="0,32.90 88,40.20 88,43.00 0,34.90" fill="#72a847"/><polygon points="0,41.75 88,48.95 88,52.45 0,44.25" fill="#72a847"/><polygon points="0,50.40 88,57.50 88,59.70 0,52.40" fill="#72a847"/><polygon points="0,52.60 88,59.70 88,61.90 0,54.60" fill="#72a847"/><polygon points="0,60.00 88,66.60 88,70.40 0,63.80" fill="#72a847"/><polygon points="0,68.75 88,76.00 88,78.20 0,71.85" fill="#72a847"/><polygon points="0,77.45 88,85.00 88,86.20 0,79.15" fill="#7cb552"/><rect x="3.0" y="46.5" width="6" height="1" fill="#8cc268"/><rect x="14.0" y="47.5" width="6" height="1" fill="#8cc268"/><rect x="25.0" y="48.5" width="6" height="1" fill="#8cc268"/><rect x="36.0" y="49.5" width="6" height="1" fill="#8cc268"/><rect x="47.0" y="50.5" width="6" height="1" fill="#8cc268"/><rect x="58.0" y="51.5" width="6" height="1" fill="#8cc268"/><rect x="6.0" y="87.5" width="5" height="1" fill="#8cc268"/><rect x="18.0" y="88.5" width="5" height="1" fill="#8cc268"/></g>
<g transform="translate(1416,1193)" shape-rendering="crispEdges"><rect x="0" y="0.2" width="25" height="2.8" fill="#6a9a3d"/><rect x="25" y="-0.2" width="63" height="2.6" fill="#6a9a3d"/><g fill="#6a9a3d"><rect x="57.8" y="3.0" width="2.1" height="1" /><rect x="60.9" y="3.0" width="2.1" height="1" /><rect x="69.8" y="4.0" width="2.1" height="1" /><rect x="72.8" y="4.0" width="2.1" height="1" /><rect x="81.8" y="5.0" width="2.1" height="1" /><rect x="84.8" y="5.0" width="2.1" height="1" /><rect x="5.9" y="7.0" width="2.1" height="1" /><rect x="9.0" y="7.0" width="2.1" height="1" /><rect x="17.9" y="8.1" width="2.1" height="1" /><rect x="21.0" y="8.1" width="2.1" height="1" /><rect x="29.9" y="9.1" width="2.1" height="1" /><rect x="33.0" y="9.1" width="2.1" height="1" /><rect x="41.9" y="10.1" width="2.1" height="1" /><rect x="45.0" y="10.1" width="2.1" height="1" /><rect x="53.9" y="11.1" width="2.1" height="1" /><rect x="57.0" y="11.1" width="2.1" height="1" /><rect x="65.9" y="12.1" width="2.1" height="1" /><rect x="69.0" y="12.1" width="2.1" height="1" /><rect x="77.9" y="13.1" width="2.1" height="1" /><rect x="81.0" y="13.1" width="2.1" height="1" /><rect x="2.1" y="15.1" width="2.1" height="1" /><rect x="5.2" y="15.1" width="2.1" height="1" /><rect x="14.1" y="16.1" width="2.1" height="1" /><rect x="17.2" y="16.1" width="2.1" height="1" /><rect x="26.1" y="17.1" width="2.1" height="1" /><rect x="29.2" y="17.1" width="2.1" height="1" /><rect x="38.0" y="18.1" width="2.1" height="1" /><rect x="41.1" y="18.1" width="2.1" height="1" /><rect x="50.0" y="19.1" width="2.1" height="1" /><rect x="53.1" y="19.1" width="2.1" height="1" /><rect x="62.0" y="20.1" width="2.1" height="1" /><rect x="65.1" y="20.1" width="2.1" height="1" /><rect x="74.0" y="21.1" width="2.1" height="1" /><rect x="77.1" y="21.1" width="2.1" height="1" /><rect x="10.2" y="24.1" width="2.1" height="1" /><rect x="13.3" y="24.1" width="2.1" height="1" /><rect x="22.2" y="25.1" width="2.1" height="1" /><rect x="25.3" y="25.1" width="2.1" height="1" /><rect x="34.2" y="26.1" width="2.1" height="1" /><rect x="37.3" y="26.1" width="2.1" height="1" /><rect x="46.2" y="27.1" width="2.1" height="1" /><rect x="49.3" y="27.1" width="2.1" height="1" /><rect x="58.2" y="28.1" width="2.1" height="1" /><rect x="61.3" y="28.1" width="2.1" height="1" /><rect x="70.2" y="29.1" width="2.1" height="1" /><rect x="73.3" y="29.1" width="2.1" height="1" /><rect x="82.2" y="30.1" width="2.1" height="1" /><rect x="85.3" y="30.1" width="2.1" height="1" /><rect x="6.3" y="32.0" width="2.1" height="1" /><rect x="9.4" y="32.0" width="2.1" height="1" /><rect x="18.4" y="33.0" width="2.1" height="1" /><rect x="21.5" y="33.0" width="2.1" height="1" /><rect x="30.4" y="34.0" width="2.1" height="1" /><rect x="33.5" y="34.0" width="2.1" height="1" /><rect x="42.4" y="35.0" width="2.1" height="1" /><rect x="45.5" y="35.0" width="2.1" height="1" /><rect x="54.4" y="36.0" width="2.1" height="1" /><rect x="57.5" y="36.0" width="2.1" height="1" /><rect x="66.3" y="37.0" width="2.1" height="1" /><rect x="69.4" y="37.0" width="2.1" height="1" /><rect x="78.3" y="38.0" width="2.1" height="1" /><rect x="81.4" y="38.0" width="2.1" height="1" /><rect x="2.5" y="40.0" width="2.1" height="1" /><rect x="5.6" y="40.0" width="2.1" height="1" /><rect x="14.5" y="41.0" width="2.1" height="1" /><rect x="17.6" y="41.0" width="2.1" height="1" /><rect x="26.5" y="42.0" width="2.1" height="1" /><rect x="29.6" y="42.0" width="2.1" height="1" /><rect x="38.5" y="43.0" width="2.1" height="1" /><rect x="41.6" y="43.0" width="2.1" height="1" /><rect x="50.5" y="44.0" width="2.1" height="1" /><rect x="53.6" y="44.0" width="2.1" height="1" /><rect x="62.5" y="45.0" width="2.1" height="1" /><rect x="65.6" y="45.0" width="2.1" height="1" /><rect x="74.5" y="46.0" width="2.1" height="1" /><rect x="77.6" y="46.0" width="2.1" height="1" /><rect x="10.7" y="49.0" width="2.1" height="1" /><rect x="13.8" y="49.0" width="2.1" height="1" /><rect x="22.6" y="50.0" width="2.1" height="1" /><rect x="25.8" y="50.0" width="2.1" height="1" /><rect x="34.6" y="51.0" width="2.1" height="1" /><rect x="37.8" y="51.0" width="2.1" height="1" /><rect x="46.6" y="52.0" width="2.1" height="1" /><rect x="49.8" y="52.0" width="2.1" height="1" /><rect x="58.6" y="53.0" width="2.1" height="1" /><rect x="61.8" y="53.0" width="2.1" height="1" /><rect x="70.7" y="54.0" width="2.1" height="1" /><rect x="73.8" y="54.0" width="2.1" height="1" /><rect x="82.7" y="55.0" width="2.1" height="1" /><rect x="85.8" y="55.0" width="2.1" height="1" /><rect x="6.8" y="57.0" width="2.1" height="1" /><rect x="9.9" y="57.0" width="2.1" height="1" /><rect x="18.8" y="58.0" width="2.1" height="1" /><rect x="21.9" y="58.0" width="2.1" height="1" /><rect x="30.8" y="59.0" width="2.1" height="1" /><rect x="33.9" y="59.0" width="2.1" height="1" /><rect x="42.8" y="60.0" width="2.1" height="1" /><rect x="45.9" y="60.0" width="2.1" height="1" /><rect x="54.8" y="61.0" width="2.1" height="1" /><rect x="57.9" y="61.0" width="2.1" height="1" /><rect x="66.8" y="62.0" width="2.1" height="1" /><rect x="69.9" y="62.0" width="2.1" height="1" /><rect x="78.8" y="63.0" width="2.1" height="1" /><rect x="81.9" y="63.0" width="2.1" height="1" /><rect x="3.0" y="65.0" width="2.1" height="1" /><rect x="6.1" y="65.0" width="2.1" height="1" /><rect x="15.0" y="66.0" width="2.1" height="1" /><rect x="18.1" y="66.0" width="2.1" height="1" /><rect x="27.0" y="67.0" width="2.1" height="1" /><rect x="30.1" y="67.0" width="2.1" height="1" /><rect x="39.0" y="68.0" width="2.1" height="1" /><rect x="42.1" y="68.0" width="2.1" height="1" /><rect x="51.0" y="69.0" width="2.1" height="1" /><rect x="54.1" y="69.0" width="2.1" height="1" /><rect x="63.0" y="70.0" width="2.1" height="1" /><rect x="66.0" y="70.0" width="2.1" height="1" /><rect x="75.0" y="71.0" width="2.1" height="1" /><rect x="78.0" y="71.0" width="2.1" height="1" /><rect x="-0.9" y="73.0" width="2.1" height="1" /><rect x="2.2" y="73.0" width="2.1" height="1" /><rect x="11.1" y="74.0" width="2.1" height="1" /><rect x="14.2" y="74.0" width="2.1" height="1" /><rect x="23.1" y="75.0" width="2.1" height="1" /><rect x="26.2" y="75.0" width="2.1" height="1" /><rect x="35.1" y="76.0" width="2.1" height="1" /><rect x="38.2" y="76.0" width="2.1" height="1" /><rect x="47.1" y="77.0" width="2.1" height="1" /><rect x="50.2" y="77.0" width="2.1" height="1" /><rect x="59.1" y="78.0" width="2.1" height="1" /><rect x="62.2" y="78.0" width="2.1" height="1" /><rect x="71.1" y="79.0" width="2.1" height="1" /><rect x="74.2" y="79.0" width="2.1" height="1" /><rect x="83.1" y="80.0" width="2.1" height="1" /><rect x="86.2" y="80.0" width="2.1" height="1" /><rect x="7.2" y="82.0" width="2.1" height="1" /><rect x="10.3" y="82.0" width="2.1" height="1" /><rect x="19.2" y="83.0" width="2.1" height="1" /><rect x="22.4" y="83.0" width="2.1" height="1" /><rect x="31.2" y="84.0" width="2.1" height="1" /><rect x="34.4" y="84.0" width="2.1" height="1" /><rect x="43.2" y="85.0" width="2.1" height="1" /><rect x="46.4" y="85.0" width="2.1" height="1" /><rect x="55.2" y="86.0" width="2.1" height="1" /><rect x="58.4" y="86.0" width="2.1" height="1" /><rect x="67.2" y="87.0" width="2.1" height="1" /><rect x="70.3" y="87.0" width="2.1" height="1" /><rect x="79.2" y="88.0" width="2.1" height="1" /><rect x="82.3" y="88.0" width="2.1" height="1" /><rect x="3.4" y="90.0" width="2.1" height="1" /><rect x="6.5" y="90.0" width="2.1" height="1" /><rect x="15.4" y="91.0" width="2.1" height="1" /><rect x="18.5" y="91.0" width="2.1" height="1" /><rect x="27.4" y="92.0" width="2.1" height="1" /><rect x="30.5" y="92.0" width="2.1" height="1" /><rect x="39.4" y="93.0" width="2.1" height="1" /><rect x="42.5" y="93.0" width="2.1" height="1" /><rect x="51.4" y="94.0" width="2.1" height="1" /><rect x="54.5" y="94.0" width="2.1" height="1" /><rect x="63.4" y="95.0" width="2.1" height="1" /><rect x="66.5" y="95.0" width="2.1" height="1" /><rect x="75.4" y="96.0" width="2.1" height="1" /><rect x="78.5" y="96.0" width="2.1" height="1" /><rect x="-0.5" y="98.0" width="2.1" height="1" /><rect x="2.6" y="98.0" width="2.1" height="1" /><rect x="11.5" y="99.0" width="2.1" height="1" /><rect x="14.6" y="99.0" width="2.1" height="1" /><rect x="23.5" y="100.0" width="2.1" height="1" /><rect x="26.6" y="100.0" width="2.1" height="1" /><rect x="35.5" y="101.0" width="2.1" height="1" /><rect x="38.6" y="101.0" width="2.1" height="1" /><rect x="47.5" y="102.0" width="2.1" height="1" /><rect x="50.6" y="102.0" width="2.1" height="1" /><rect x="59.5" y="103.0" width="2.1" height="1" /><rect x="62.6" y="103.0" width="2.1" height="1" /><rect x="71.5" y="104.0" width="2.1" height="1" /><rect x="74.6" y="104.0" width="2.1" height="1" /></g><polygon points="6.6,26.12 88,32.00 88,34.00 6.6,27.12" fill="#86bd5e"/><polygon points="0,32.90 88,40.20 88,43.00 0,34.90" fill="#72a847"/><polygon points="0,41.75 88,48.95 88,52.45 0,44.25" fill="#72a847"/><polygon points="0,50.40 88,57.50 88,59.70 0,52.40" fill="#72a847"/><polygon points="0,52.60 88,59.70 88,61.90 0,54.60" fill="#72a847"/><polygon points="0,60.00 88,66.60 88,70.40 0,63.80" fill="#72a847"/><polygon points="0,68.75 88,76.00 88,78.20 0,71.85" fill="#72a847"/><polygon points="0,77.45 88,85.00 88,86.20 0,79.15" fill="#7cb552"/><rect x="3.0" y="46.5" width="6" height="1" fill="#8cc268"/><rect x="14.0" y="47.5" width="6" height="1" fill="#8cc268"/><rect x="25.0" y="48.5" width="6" height="1" fill="#8cc268"/><rect x="36.0" y="49.5" width="6" height="1" fill="#8cc268"/><rect x="47.0" y="50.5" width="6" height="1" fill="#8cc268"/><rect x="58.0" y="51.5" width="6" height="1" fill="#8cc268"/><rect x="6.0" y="87.5" width="5" height="1" fill="#8cc268"/><rect x="18.0" y="88.5" width="5" height="1" fill="#8cc268"/></g>
<g transform="translate(1340,1193)" shape-rendering="crispEdges"><g fill="#b08a3a"><rect x="2" y="-1.1" width="2.1" height="1"/><rect x="5.1" y="-1.1" width="2.1" height="1"/><rect x="24" y="-0.1" width="2.1" height="1"/><rect x="27.1" y="-0.1" width="2.1" height="1"/><rect x="46" y="0.9" width="2.1" height="1"/><rect x="49.1" y="0.9" width="2.1" height="1"/><rect x="68" y="1.9" width="2.1" height="1"/><rect x="71.1" y="1.9" width="2.1" height="1"/><rect x="12" y="3.9" width="2.1" height="1"/><rect x="15.1" y="3.9" width="2.1" height="1"/><rect x="34" y="4.9" width="2.1" height="1"/><rect x="37.1" y="4.9" width="2.1" height="1"/><rect x="56" y="5.9" width="2.1" height="1"/><rect x="59.1" y="5.9" width="2.1" height="1"/></g><polygon points="0,6.5 35,6 35,5.3 77,5.3 77,8 0,8.3" fill="#ae8834"/><polygon points="0,13 53,13 53,12.3 77,12.3 77,15 0,15.6" fill="#6a9a3d"/><g fill="#6a9a3d"><rect x="4.0" y="19.5" width="2.1" height="1"/><rect x="7.1" y="19.5" width="2.1" height="1"/><rect x="26.0" y="20.5" width="2.1" height="1"/><rect x="29.1" y="20.5" width="2.1" height="1"/><rect x="48.0" y="21.5" width="2.1" height="1"/><rect x="51.1" y="21.5" width="2.1" height="1"/><rect x="70.0" y="22.5" width="2.1" height="1"/><rect x="73.1" y="22.5" width="2.1" height="1"/><rect x="0.0" y="24.5" width="2.1" height="1"/><rect x="3.1" y="24.5" width="2.1" height="1"/><rect x="22.0" y="25.5" width="2.1" height="1"/><rect x="25.1" y="25.5" width="2.1" height="1"/><rect x="44.0" y="26.5" width="2.1" height="1"/><rect x="47.1" y="26.5" width="2.1" height="1"/><rect x="66.0" y="27.5" width="2.1" height="1"/><rect x="69.1" y="27.5" width="2.1" height="1"/><rect x="18.0" y="30.5" width="2.1" height="1"/><rect x="21.1" y="30.5" width="2.1" height="1"/><rect x="40.0" y="31.5" width="2.1" height="1"/><rect x="43.1" y="31.5" width="2.1" height="1"/><rect x="62.0" y="32.5" width="2.1" height="1"/><rect x="65.1" y="32.5" width="2.1" height="1"/><rect x="14.0" y="35.5" width="2.1" height="1"/><rect x="17.1" y="35.5" width="2.1" height="1"/><rect x="36.0" y="36.5" width="2.1" height="1"/><rect x="39.1" y="36.5" width="2.1" height="1"/><rect x="58.0" y="37.5" width="2.1" height="1"/><rect x="61.1" y="37.5" width="2.1" height="1"/><rect x="10.0" y="40.5" width="2.1" height="1"/><rect x="13.1" y="40.5" width="2.1" height="1"/><rect x="32.0" y="41.5" width="2.1" height="1"/><rect x="35.1" y="41.5" width="2.1" height="1"/><rect x="54.0" y="42.5" width="2.1" height="1"/><rect x="57.1" y="42.5" width="2.1" height="1"/></g><polygon points="0.0,39.4 24.0,41.1 24.0,42.3 0.0,40.6" fill="#86c85a"/><polygon points="26.0,41.3 50.0,43.0 50.0,44.2 26.0,42.5" fill="#86c85a"/><polygon points="52.0,43.1 76.0,44.8 76.0,46.0 52.0,44.3" fill="#86c85a"/><polygon points="7.0,44.3 31.0,46.0 31.0,47.2 7.0,45.5" fill="#7cc04e"/><polygon points="33.0,46.2 57.0,47.9 57.0,49.1 33.0,47.4" fill="#7cc04e"/><polygon points="59.0,48.0 77.0,49.3 77.0,50.5 59.0,49.2" fill="#7cc04e"/><polygon points="5.0,48.6 29.0,50.3 29.0,51.5 5.0,49.8" fill="#86c85a"/><polygon points="31.0,50.4 55.0,52.1 55.0,53.3 31.0,51.6" fill="#86c85a"/><polygon points="57.0,52.3 77.0,53.7 77.0,54.9 57.0,53.5" fill="#86c85a"/><polygon points="3.0,52.8 27.0,54.5 27.0,55.7 3.0,54.0" fill="#7cc04e"/><polygon points="29.0,54.7 53.0,56.4 53.0,57.6 29.0,55.9" fill="#7cc04e"/><polygon points="55.0,56.5 77.0,58.1 77.0,59.3 55.0,57.7" fill="#7cc04e"/><polygon points="1.0,56.9 25.0,58.6 25.0,60.2 1.0,58.5" fill="#86c85a"/><polygon points="27.0,58.7 51.0,60.4 51.0,62.0 27.0,60.3" fill="#86c85a"/><polygon points="53.0,60.6 77.0,62.3 77.0,63.9 53.0,62.2" fill="#86c85a"/><polygon points="8.0,61.8 32.0,63.5 32.0,65.1 8.0,63.4" fill="#7cc04e"/><polygon points="34.0,63.6 58.0,65.3 58.0,66.9 34.0,65.2" fill="#7cc04e"/><polygon points="60.0,65.5 77.0,66.7 77.0,68.3 60.0,67.1" fill="#7cc04e"/><polygon points="6.0,66.0 30.0,67.7 30.0,69.3 6.0,67.6" fill="#86c85a"/><polygon points="32.0,67.9 56.0,69.6 56.0,71.2 32.0,69.5" fill="#86c85a"/><polygon points="58.0,69.7 77.0,71.1 77.0,72.7 58.0,71.3" fill="#86c85a"/><polygon points="4.0,70.3 28.0,72.0 28.0,73.6 4.0,71.9" fill="#7cc04e"/><polygon points="30.0,72.1 54.0,73.9 54.0,75.5 30.0,73.7" fill="#7cc04e"/><polygon points="56.0,74.0 77.0,75.5 77.0,77.1 56.0,75.6" fill="#7cc04e"/><polygon points="2.0,74.5 26.0,76.3 26.0,77.9 2.0,76.1" fill="#86c85a"/><polygon points="28.0,76.4 52.0,78.1 52.0,79.7 28.0,78.0" fill="#86c85a"/><polygon points="54.0,78.3 77.0,79.9 77.0,81.5 54.0,79.9" fill="#86c85a"/><polygon points="0.0,78.8 24.0,80.5 24.0,82.1 0.0,80.4" fill="#7cc04e"/><polygon points="26.0,80.7 50.0,82.4 50.0,84.0 26.0,82.3" fill="#7cc04e"/><polygon points="52.0,82.5 76.0,84.2 76.0,85.8 52.0,84.1" fill="#7cc04e"/><polygon points="7.0,83.7 31.0,85.4 31.0,87.0 7.0,85.3" fill="#86c85a"/><polygon points="33.0,85.6 57.0,87.3 57.0,88.9 33.0,87.2" fill="#86c85a"/><polygon points="59.0,87.4 77.0,88.7 77.0,90.3 59.0,89.0" fill="#86c85a"/><polygon points="5.0,88.0 29.0,89.7 29.0,91.3 5.0,89.6" fill="#7cc04e"/><polygon points="31.0,89.8 55.0,91.5 55.0,93.1 31.0,91.4" fill="#7cc04e"/><polygon points="57.0,91.7 77.0,93.1 77.0,94.7 57.0,93.3" fill="#7cc04e"/><polygon points="3.0,92.2 27.0,93.9 27.0,95.5 3.0,93.8" fill="#86c85a"/><polygon points="29.0,94.1 53.0,95.8 53.0,97.4 29.0,95.7" fill="#86c85a"/><polygon points="55.0,95.9 77.0,97.5 77.0,99.1 55.0,97.5" fill="#86c85a"/><polygon points="1.0,96.5 25.0,98.2 25.0,99.8 1.0,98.1" fill="#7cc04e"/><polygon points="27.0,98.3 51.0,100.0 51.0,101.6 27.0,99.9" fill="#7cc04e"/><polygon points="53.0,100.2 77.0,101.9 77.0,103.5 53.0,101.8" fill="#7cc04e"/><rect x="0.0" y="45.0" width="2.1" height="1" fill="#5f9436"/><rect x="3.1" y="45.0" width="2.1" height="1" fill="#5f9436"/><rect x="22.0" y="45.5" width="2.1" height="1" fill="#5f9436"/><rect x="25.1" y="45.5" width="2.1" height="1" fill="#5f9436"/><rect x="44.0" y="46.0" width="2.1" height="1" fill="#5f9436"/><rect x="47.1" y="46.0" width="2.1" height="1" fill="#5f9436"/><rect x="66.0" y="46.5" width="2.1" height="1" fill="#5f9436"/><rect x="69.1" y="46.5" width="2.1" height="1" fill="#5f9436"/><rect x="16.0" y="50.5" width="2.1" height="1" fill="#5f9436"/><rect x="19.1" y="50.5" width="2.1" height="1" fill="#5f9436"/><rect x="38.0" y="51.0" width="2.1" height="1" fill="#5f9436"/><rect x="41.1" y="51.0" width="2.1" height="1" fill="#5f9436"/><rect x="60.0" y="51.5" width="2.1" height="1" fill="#5f9436"/><rect x="63.1" y="51.5" width="2.1" height="1" fill="#5f9436"/><rect x="10.0" y="55.5" width="2.1" height="1" fill="#5f9436"/><rect x="13.1" y="55.5" width="2.1" height="1" fill="#5f9436"/><rect x="32.0" y="56.0" width="2.1" height="1" fill="#5f9436"/><rect x="35.1" y="56.0" width="2.1" height="1" fill="#5f9436"/><rect x="54.0" y="56.5" width="2.1" height="1" fill="#5f9436"/><rect x="57.1" y="56.5" width="2.1" height="1" fill="#5f9436"/><rect x="4.0" y="60.5" width="2.1" height="1" fill="#5f9436"/><rect x="7.1" y="60.5" width="2.1" height="1" fill="#5f9436"/><rect x="26.0" y="61.0" width="2.1" height="1" fill="#5f9436"/><rect x="29.1" y="61.0" width="2.1" height="1" fill="#5f9436"/><rect x="48.0" y="61.5" width="2.1" height="1" fill="#5f9436"/><rect x="51.1" y="61.5" width="2.1" height="1" fill="#5f9436"/><rect x="70.0" y="62.0" width="2.1" height="1" fill="#5f9436"/><rect x="73.1" y="62.0" width="2.1" height="1" fill="#5f9436"/><rect x="20.0" y="66.0" width="2.1" height="1" fill="#5f9436"/><rect x="23.1" y="66.0" width="2.1" height="1" fill="#5f9436"/><rect x="42.0" y="66.5" width="2.1" height="1" fill="#5f9436"/><rect x="45.1" y="66.5" width="2.1" height="1" fill="#5f9436"/><rect x="64.0" y="67.0" width="2.1" height="1" fill="#5f9436"/><rect x="67.1" y="67.0" width="2.1" height="1" fill="#5f9436"/><rect x="14.0" y="71.0" width="2.1" height="1" fill="#5f9436"/><rect x="17.1" y="71.0" width="2.1" height="1" fill="#5f9436"/><rect x="36.0" y="71.5" width="2.1" height="1" fill="#5f9436"/><rect x="39.1" y="71.5" width="2.1" height="1" fill="#5f9436"/><rect x="58.0" y="72.0" width="2.1" height="1" fill="#5f9436"/><rect x="61.1" y="72.0" width="2.1" height="1" fill="#5f9436"/><rect x="8.0" y="76.0" width="2.1" height="1" fill="#5f9436"/><rect x="11.1" y="76.0" width="2.1" height="1" fill="#5f9436"/><rect x="30.0" y="76.5" width="2.1" height="1" fill="#5f9436"/><rect x="33.1" y="76.5" width="2.1" height="1" fill="#5f9436"/><rect x="52.0" y="77.0" width="2.1" height="1" fill="#5f9436"/><rect x="55.1" y="77.0" width="2.1" height="1" fill="#5f9436"/><rect x="2.0" y="81.0" width="2.1" height="1" fill="#5f9436"/><rect x="5.1" y="81.0" width="2.1" height="1" fill="#5f9436"/><rect x="24.0" y="81.5" width="2.1" height="1" fill="#5f9436"/><rect x="27.1" y="81.5" width="2.1" height="1" fill="#5f9436"/><rect x="46.0" y="82.0" width="2.1" height="1" fill="#5f9436"/><rect x="49.1" y="82.0" width="2.1" height="1" fill="#5f9436"/><rect x="68.0" y="82.5" width="2.1" height="1" fill="#5f9436"/><rect x="71.1" y="82.5" width="2.1" height="1" fill="#5f9436"/></g>
<text x="299.5" y="1224.5" font-size="23.55" fill="#8a8a8a" textLength="146.3" lengthAdjust="spacingAndGlyphs">BP Category *</text>
<text x="299.5" y="1272.0" font-size="35.76" fill="#0a0a0a" textLength="146.0" lengthAdjust="spacingAndGlyphs">Customer</text>
<polyline points="752.5,1252.5 768.3,1267.9 784.1,1252.5" fill="none" stroke="#000" stroke-width="2.45" stroke-linecap="round"/>
<text x="909.5" y="1224.5" font-size="23.55" fill="#8a8a8a" textLength="116.3" lengthAdjust="spacingAndGlyphs">Comments</text>
<text x="909.5" y="1272.0" font-size="35.76" fill="#0a0a0a" textLength="78.6" lengthAdjust="spacingAndGlyphs">None</text>
<rect x="1520" y="1194" width="97" height="96" fill="#fff" stroke="#6b9e3d" stroke-width="2"/>
<polygon points="1533,1245.5 1545.9,1232.6 1559.2,1245.5 1592.4,1212.1 1605,1224.9 1559.2,1270.9" fill="#79ae4c"/>
<text x="1657.0" y="1249.6" font-size="35.76" fill="#0a0a0a" textLength="280.0" lengthAdjust="spacingAndGlyphs">Customer Consent</text>
<rect x="1494.2" y="1409.2" width="237.3" height="106.5" rx="9" fill="#fff" stroke="#b8b8b8" stroke-width="2"/>
<text x="1562.3" y="1472.3" font-size="36.34" fill="#79b04c" textLength="100.0" lengthAdjust="spacingAndGlyphs">Cancel</text>
<rect x="1777" y="1408" width="240" height="109" rx="8" fill="#d6e6c7"/>
<text x="1861.3" y="1471.6" font-size="34.88" fill="#ffffff" textLength="70.4" lengthAdjust="spacingAndGlyphs">Save</text>
<path d="M2023.3,1309.6 C2036,1318 2052,1335 2056,1360 C2060,1400 2050,1445 2030,1485 C2005,1530 1965,1560 1921,1577.7 C1890,1588 1850,1588 1815,1585.4 C1780,1583 1745,1575 1728,1560 C1712,1545 1710,1520 1712,1490 C1716,1450 1735,1405 1770,1375 C1795,1352 1830,1335 1863,1328" fill="none" stroke="#e8454b" stroke-width="17" stroke-linecap="round"/>
<path d="M1863,1320 C1900,1318 1950,1323 1990,1333 C2015,1339 2035,1345 2046,1349 L2044,1352 C2020,1347 1990,1342 1960,1338 C1920,1333 1890,1333 1863,1336 Z" fill="#e8454b"/>
<path d="M1994.2,1054.9 L1993.1,1095 L1988.2,1127.5 L1988.8,1166.6 L1992.1,1218.7 L1996.8,1279.5 L2013.8,1283.7 L2022.4,1240 L2025.7,1175 L2023.5,1110 L2017,1082 L2011.4,1081 L2009.4,1070 L2003.2,1069 L2001.8,1055 Q1998,1048 1994.2,1054.9 Z" fill="#e8454b"/>
<path d="M2018,1266 L2048.6,1197 L2049.7,1187.2 L2061.5,1168.8 L2096.2,1129.7 L2101.6,1112.3 L2109.2,1071.2 Q2115,1064 2116.8,1071 L2117.9,1086.3 L2141.8,1045.1 L2169.9,1003.9 L2178.6,999.5 L2182.9,1003.9 L2191.6,990.8 Q2198,985 2198.4,995 L2195.1,1008.2 L2200.5,1007.2 L2201.6,1029.9 L2150.5,1114.5 L2115.7,1175.3 L2071,1249 L2047,1287 Z" fill="#e8454b"/>
<path d="M2020,1300 L2061.5,1260 L2113.6,1240.5 L2155,1219 L2161,1225 L2191.6,1216.4 Q2198,1213 2195.9,1220.7 L2177.5,1249 L2187.3,1259.8 L2130.9,1281.5 L2091.8,1296.7 L2048.6,1309.6 L2020,1318 Z" fill="#e8454b"/>
<polygon points="2005.1,1279.4 2018.1,1262 2070.2,1253.4 2091.9,1296.8 2048.5,1314.1 2022.4,1318.5 2009.4,1309.8" fill="#e8454b"/>
<line x1="1960" y1="1280.5" x2="2015" y2="1300" stroke="#e8454b" stroke-width="15" stroke-linecap="round"/>
<path d="M2005,1285 L2040,1290 L2048,1318 L2030,1322 L2012,1312 Z" fill="#e8454b"/>
</svg></body></html>
